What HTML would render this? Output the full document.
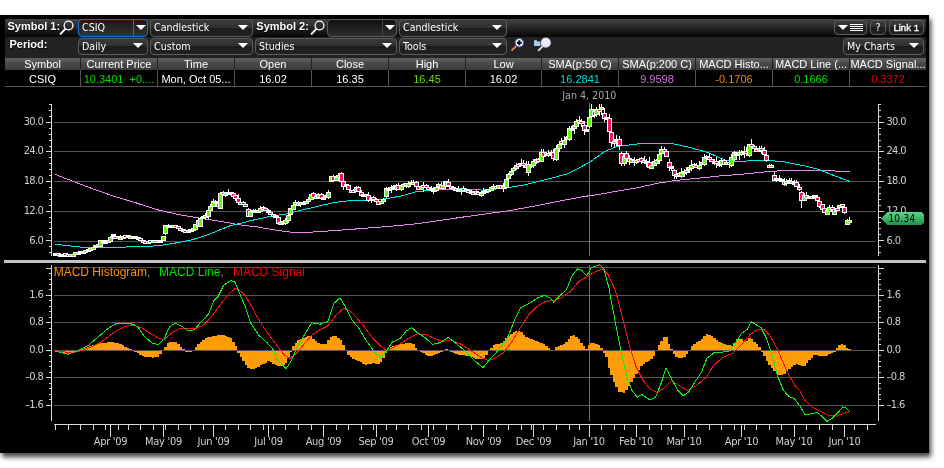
<!DOCTYPE html>
<html><head><meta charset="utf-8"><title>Chart</title>
<style>
html,body{margin:0;padding:0;background:#fff;}
body{width:944px;height:468px;position:relative;overflow:hidden;font-family:"Liberation Sans",Arial,sans-serif;}
#win{position:absolute;left:0;top:15px;width:929px;height:438px;background:#000;box-shadow:2px 4px 5px rgba(0,0,0,.75);}
#tb1{position:absolute;left:5px;top:19px;width:921px;height:18px;background:linear-gradient(#444,#050505);}
#tb2{position:absolute;left:5px;top:37px;width:921px;height:21px;background:#222;}
.lbl{position:absolute;color:#fff;font-weight:bold;font-size:11px;line-height:14px;white-space:nowrap;text-shadow:0 1px 1px #000;}
.cb{position:absolute;box-sizing:border-box;border:1px solid #5c5c5c;border-radius:4px;background:linear-gradient(#3a3a3a 0,#303030 50%,#1c1c1c 50%,#222 100%);color:#fff;font-family:"DejaVu Sans Condensed","DejaVu Sans","Liberation Sans",sans-serif;font-size:10.6px;line-height:15px;white-space:nowrap;}
.cb span{position:absolute;left:3px;top:-0.5px;}
.cb i{position:absolute;right:4px;top:4px;width:0;height:0;border-left:5px solid transparent;border-right:5px solid transparent;border-top:5.5px solid #fff;}
.mag{position:absolute;}
.th{position:absolute;top:58px;height:12px;box-sizing:border-box;border-left:1px solid #222;color:#fff;font-size:11px;line-height:12px;text-align:center;white-space:nowrap;overflow:hidden;background:linear-gradient(#626262,#484848 50%,#3a3a3a);}
.td{position:absolute;top:70px;height:17px;box-sizing:border-box;border-left:1px solid #555;border-bottom:1px solid #555;font-size:11px;line-height:18px;text-align:center;white-space:nowrap;overflow:hidden;background:#000;}
.al,.ar,.ml,.cur{position:absolute;font-family:"DejaVu Sans Condensed","DejaVu Sans","Liberation Sans",sans-serif;font-size:11px;line-height:14px;color:#d0d0d0;white-space:nowrap;letter-spacing:-0.6px;}
.al{left:0;width:43.3px;text-align:right;}
.ar{left:886.4px;}
.ml{top:434.7px;width:60px;text-align:center;letter-spacing:-0.3px;}
#div{position:absolute;left:4px;top:260px;width:922px;height:3px;background:#c4c4c4;}
#leg{position:absolute;left:53.7px;top:265px;font-size:12px;line-height:14px;white-space:nowrap;}
#chart{position:absolute;left:0;top:0;}
#ptag{position:absolute;left:881px;top:212px;}
</style></head><body><div id="all" style="position:absolute;left:0;top:0;width:944px;height:468px;will-change:transform">
<div id="win"></div>
<div id="tb1"></div><div id="tb2"></div>
<div class="lbl" style="left:7.5px;top:19px">Symbol 1:</div>
<svg class="mag" style="left:59px;top:19px" width="16" height="16" viewBox="0 0 16 16"><circle cx="9.5" cy="6.5" r="4.4" fill="none" stroke="#fff" stroke-width="1.3"/><line x1="6.3" y1="9.9" x2="1.6" y2="14.8" stroke="#fff" stroke-width="1.9" stroke-linecap="round"/></svg>
<div class="lbl" style="left:9.5px;top:37px">Period:</div>
<div class="cb" style="left:78px;top:19px;width:70px;height:18px;border-color:#1b74c9;background:linear-gradient(#1a1a1a,#333);"><span>CSIQ</span><i style="top:5px;right:1px"></i></div>
<div style="position:absolute;left:133px;top:20px;width:1px;height:16px;background:#1b74c9"></div>
<div class="cb" style="left:150px;top:19px;width:103px;height:18px;"><span>Candlestick</span><i style="top:5px;right:4px"></i></div>
<div class="lbl" style="left:256.3px;top:19px">Symbol 2:</div>
<svg class="mag" style="left:309.7px;top:19px" width="16" height="16" viewBox="0 0 16 16"><circle cx="9.5" cy="6.5" r="4.4" fill="none" stroke="#fff" stroke-width="1.3"/><line x1="6.3" y1="9.9" x2="1.6" y2="14.8" stroke="#fff" stroke-width="1.9" stroke-linecap="round"/></svg>
<div class="cb" style="left:327px;top:19px;width:70px;height:18px;background:linear-gradient(#111,#2e2e2e);"><span></span><i style="top:5px;right:1px"></i></div>
<div style="position:absolute;left:382px;top:20px;width:1px;height:16px;background:#444"></div>
<div class="cb" style="left:399px;top:19px;width:108px;height:18px;"><span>Candlestick</span><i style="top:5px;right:4px"></i></div>
<div class="cb" style="left:78px;top:38px;width:70px;height:17px;"><span>Daily</span><i style="top:4px;right:4px"></i></div>
<div class="cb" style="left:150px;top:38px;width:103px;height:17px;"><span>Custom</span><i style="top:4px;right:4px"></i></div>
<div class="cb" style="left:255px;top:38px;width:142px;height:17px;"><span>Studies</span><i style="top:4px;right:4px"></i></div>
<div class="cb" style="left:399px;top:38px;width:108px;height:17px;"><span>Tools</span><i style="top:4px;right:4px"></i></div>
<svg class="mag" style="left:510px;top:37px" width="16" height="16" viewBox="0 0 16 16"><line x1="5.7" y1="9.6" x2="2" y2="13" stroke="#e08a3c" stroke-width="1.8" stroke-linecap="round"/><circle cx="9.3" cy="5.7" r="4.2" fill="#fff" stroke="#3a5cd0" stroke-width="1"/><path d="M6.8 5.7h5M9.3 3.2v5" stroke="#000" stroke-width="1.9"/></svg>
<svg class="mag" style="left:534px;top:37px" width="20" height="16" viewBox="0 0 20 16"><path d="M0 3.2h2.6l1 1.2h2.8v4.6h-6.4z" fill="#a6d0ee"/><line x1="8.3" y1="9.6" x2="4.6" y2="13.3" stroke="#f0d6cc" stroke-width="1.9" stroke-linecap="round"/><circle cx="11.8" cy="5.7" r="4.4" fill="#f6f6ff" stroke="#d4d6f2" stroke-width="1.4"/><circle cx="11.8" cy="5.7" r="2.2" fill="none" stroke="#dcdcf6" stroke-width="1"/></svg>
<div class="cb" style="left:834px;top:20px;width:33px;height:15px;border-radius:4px"><i style="right:auto;left:2.7px;top:3.5px"></i><b style="position:absolute;left:15px;top:3px;width:13px;height:7px;background:repeating-linear-gradient(#fff 0,#fff 1px,transparent 1px,transparent 2px)"></b></div>
<div class="cb" style="left:870px;top:20px;width:16px;height:15px;text-align:center;line-height:12px"><span style="left:4.5px;top:0">?</span></div>
<div class="cb" style="left:889px;top:20px;width:35px;height:15px;line-height:12px;font-family:'Liberation Sans',sans-serif;font-size:9.6px;-webkit-text-stroke:0.35px #fff"><span style="left:3.4px;top:1px">Link 1</span></div>
<div class="cb" style="left:843px;top:38px;width:81px;height:17px;"><span>My Charts</span><i style="top:4px;right:4px"></i></div>
<div class="th" style="left:5px;width:75px;border-left:0">Symbol</div><div class="th" style="left:80px;width:77px">Current Price</div><div class="th" style="left:157px;width:77px">Time</div><div class="th" style="left:234px;width:77px">Open</div><div class="th" style="left:311px;width:77px">Close</div><div class="th" style="left:388px;width:77px">High</div><div class="th" style="left:465px;width:76px">Low</div><div class="th" style="left:541px;width:77px">SMA(p:50 C)</div><div class="th" style="left:618px;width:77px">SMA(p:200 C)</div><div class="th" style="left:695px;width:77px">MACD Histo...</div><div class="th" style="left:772px;width:77px">MACD Line (...</div><div class="th" style="left:849px;width:77px">MACD Signal...</div><div class="td" style="left:5px;width:75px;color:#fff;border-left:0">CSIQ</div><div class="td" style="left:80px;width:77px;color:#00e200"><span style="color:#00e200">10.3401&nbsp;&nbsp;+0....</span></div><div class="td" style="left:157px;width:77px;color:#fff">Mon, Oct 05...</div><div class="td" style="left:234px;width:77px;color:#fff">16.02</div><div class="td" style="left:311px;width:77px;color:#fff">16.35</div><div class="td" style="left:388px;width:77px;color:#5fdc00">16.45</div><div class="td" style="left:465px;width:76px;color:#fff">16.02</div><div class="td" style="left:541px;width:77px;color:#00d8d8">16.2841</div><div class="td" style="left:618px;width:77px;color:#d070d8">9.9598</div><div class="td" style="left:695px;width:77px;color:#ee8800">-0.1706</div><div class="td" style="left:772px;width:77px;color:#00e200">0.1666</div><div class="td" style="left:849px;width:77px;color:#e80000">0.3372</div>
<svg id="chart" width="944" height="468" viewBox="0 0 944 468">
<g shape-rendering="crispEdges">
<rect x="54" y="122" width="822" height="1" fill="#555555"/>
<rect x="54" y="151" width="822" height="1" fill="#555555"/>
<rect x="54" y="181" width="822" height="1" fill="#555555"/>
<rect x="54" y="211" width="822" height="1" fill="#555555"/>
<rect x="54" y="241" width="822" height="1" fill="#555555"/>
<rect x="51" y="104" width="1" height="152" fill="#d8d8d8"/>
<rect x="878" y="104" width="1" height="152" fill="#d8d8d8"/>
<rect x="49" y="104" width="2" height="1" fill="#d8d8d8"/>
<rect x="879" y="104" width="2" height="1" fill="#d8d8d8"/>
<rect x="49" y="110" width="2" height="1" fill="#d8d8d8"/>
<rect x="879" y="110" width="2" height="1" fill="#d8d8d8"/>
<rect x="49" y="116" width="2" height="1" fill="#d8d8d8"/>
<rect x="879" y="116" width="2" height="1" fill="#d8d8d8"/>
<rect x="46" y="122" width="5" height="1" fill="#d8d8d8"/>
<rect x="879" y="122" width="5" height="1" fill="#d8d8d8"/>
<rect x="49" y="128" width="2" height="1" fill="#d8d8d8"/>
<rect x="879" y="128" width="2" height="1" fill="#d8d8d8"/>
<rect x="49" y="134" width="2" height="1" fill="#d8d8d8"/>
<rect x="879" y="134" width="2" height="1" fill="#d8d8d8"/>
<rect x="49" y="140" width="2" height="1" fill="#d8d8d8"/>
<rect x="879" y="140" width="2" height="1" fill="#d8d8d8"/>
<rect x="49" y="146" width="2" height="1" fill="#d8d8d8"/>
<rect x="879" y="146" width="2" height="1" fill="#d8d8d8"/>
<rect x="46" y="151" width="5" height="1" fill="#d8d8d8"/>
<rect x="879" y="151" width="5" height="1" fill="#d8d8d8"/>
<rect x="49" y="157" width="2" height="1" fill="#d8d8d8"/>
<rect x="879" y="157" width="2" height="1" fill="#d8d8d8"/>
<rect x="49" y="163" width="2" height="1" fill="#d8d8d8"/>
<rect x="879" y="163" width="2" height="1" fill="#d8d8d8"/>
<rect x="49" y="169" width="2" height="1" fill="#d8d8d8"/>
<rect x="879" y="169" width="2" height="1" fill="#d8d8d8"/>
<rect x="49" y="175" width="2" height="1" fill="#d8d8d8"/>
<rect x="879" y="175" width="2" height="1" fill="#d8d8d8"/>
<rect x="46" y="181" width="5" height="1" fill="#d8d8d8"/>
<rect x="879" y="181" width="5" height="1" fill="#d8d8d8"/>
<rect x="49" y="187" width="2" height="1" fill="#d8d8d8"/>
<rect x="879" y="187" width="2" height="1" fill="#d8d8d8"/>
<rect x="49" y="193" width="2" height="1" fill="#d8d8d8"/>
<rect x="879" y="193" width="2" height="1" fill="#d8d8d8"/>
<rect x="49" y="199" width="2" height="1" fill="#d8d8d8"/>
<rect x="879" y="199" width="2" height="1" fill="#d8d8d8"/>
<rect x="49" y="205" width="2" height="1" fill="#d8d8d8"/>
<rect x="879" y="205" width="2" height="1" fill="#d8d8d8"/>
<rect x="46" y="211" width="5" height="1" fill="#d8d8d8"/>
<rect x="879" y="211" width="5" height="1" fill="#d8d8d8"/>
<rect x="49" y="217" width="2" height="1" fill="#d8d8d8"/>
<rect x="879" y="217" width="2" height="1" fill="#d8d8d8"/>
<rect x="49" y="222" width="2" height="1" fill="#d8d8d8"/>
<rect x="879" y="222" width="2" height="1" fill="#d8d8d8"/>
<rect x="49" y="228" width="2" height="1" fill="#d8d8d8"/>
<rect x="879" y="228" width="2" height="1" fill="#d8d8d8"/>
<rect x="49" y="234" width="2" height="1" fill="#d8d8d8"/>
<rect x="879" y="234" width="2" height="1" fill="#d8d8d8"/>
<rect x="46" y="240" width="5" height="1" fill="#d8d8d8"/>
<rect x="879" y="240" width="5" height="1" fill="#d8d8d8"/>
<rect x="49" y="246" width="2" height="1" fill="#d8d8d8"/>
<rect x="879" y="246" width="2" height="1" fill="#d8d8d8"/>
<rect x="49" y="252" width="2" height="1" fill="#d8d8d8"/>
<rect x="879" y="252" width="2" height="1" fill="#d8d8d8"/>
<rect x="54" y="267" width="822" height="1" fill="#555555"/>
<rect x="54" y="295" width="822" height="1" fill="#555555"/>
<rect x="54" y="322" width="822" height="1" fill="#555555"/>
<rect x="54" y="350" width="822" height="1" fill="#555555"/>
<rect x="54" y="377" width="822" height="1" fill="#555555"/>
<rect x="54" y="405" width="822" height="1" fill="#555555"/>
<rect x="51" y="265" width="1" height="156" fill="#d8d8d8"/>
<rect x="878" y="265" width="1" height="156" fill="#d8d8d8"/>
<rect x="46" y="268" width="5" height="1" fill="#d8d8d8"/>
<rect x="879" y="268" width="5" height="1" fill="#d8d8d8"/>
<rect x="49" y="273" width="2" height="1" fill="#d8d8d8"/>
<rect x="879" y="273" width="2" height="1" fill="#d8d8d8"/>
<rect x="49" y="279" width="2" height="1" fill="#d8d8d8"/>
<rect x="879" y="279" width="2" height="1" fill="#d8d8d8"/>
<rect x="49" y="284" width="2" height="1" fill="#d8d8d8"/>
<rect x="879" y="284" width="2" height="1" fill="#d8d8d8"/>
<rect x="49" y="289" width="2" height="1" fill="#d8d8d8"/>
<rect x="879" y="289" width="2" height="1" fill="#d8d8d8"/>
<rect x="46" y="295" width="5" height="1" fill="#d8d8d8"/>
<rect x="879" y="295" width="5" height="1" fill="#d8d8d8"/>
<rect x="49" y="300" width="2" height="1" fill="#d8d8d8"/>
<rect x="879" y="300" width="2" height="1" fill="#d8d8d8"/>
<rect x="49" y="306" width="2" height="1" fill="#d8d8d8"/>
<rect x="879" y="306" width="2" height="1" fill="#d8d8d8"/>
<rect x="49" y="311" width="2" height="1" fill="#d8d8d8"/>
<rect x="879" y="311" width="2" height="1" fill="#d8d8d8"/>
<rect x="49" y="317" width="2" height="1" fill="#d8d8d8"/>
<rect x="879" y="317" width="2" height="1" fill="#d8d8d8"/>
<rect x="46" y="322" width="5" height="1" fill="#d8d8d8"/>
<rect x="879" y="322" width="5" height="1" fill="#d8d8d8"/>
<rect x="49" y="328" width="2" height="1" fill="#d8d8d8"/>
<rect x="879" y="328" width="2" height="1" fill="#d8d8d8"/>
<rect x="49" y="333" width="2" height="1" fill="#d8d8d8"/>
<rect x="879" y="333" width="2" height="1" fill="#d8d8d8"/>
<rect x="49" y="339" width="2" height="1" fill="#d8d8d8"/>
<rect x="879" y="339" width="2" height="1" fill="#d8d8d8"/>
<rect x="49" y="344" width="2" height="1" fill="#d8d8d8"/>
<rect x="879" y="344" width="2" height="1" fill="#d8d8d8"/>
<rect x="46" y="350" width="5" height="1" fill="#d8d8d8"/>
<rect x="879" y="350" width="5" height="1" fill="#d8d8d8"/>
<rect x="49" y="355" width="2" height="1" fill="#d8d8d8"/>
<rect x="879" y="355" width="2" height="1" fill="#d8d8d8"/>
<rect x="49" y="361" width="2" height="1" fill="#d8d8d8"/>
<rect x="879" y="361" width="2" height="1" fill="#d8d8d8"/>
<rect x="49" y="366" width="2" height="1" fill="#d8d8d8"/>
<rect x="879" y="366" width="2" height="1" fill="#d8d8d8"/>
<rect x="49" y="372" width="2" height="1" fill="#d8d8d8"/>
<rect x="879" y="372" width="2" height="1" fill="#d8d8d8"/>
<rect x="46" y="377" width="5" height="1" fill="#d8d8d8"/>
<rect x="879" y="377" width="5" height="1" fill="#d8d8d8"/>
<rect x="49" y="383" width="2" height="1" fill="#d8d8d8"/>
<rect x="879" y="383" width="2" height="1" fill="#d8d8d8"/>
<rect x="49" y="388" width="2" height="1" fill="#d8d8d8"/>
<rect x="879" y="388" width="2" height="1" fill="#d8d8d8"/>
<rect x="49" y="394" width="2" height="1" fill="#d8d8d8"/>
<rect x="879" y="394" width="2" height="1" fill="#d8d8d8"/>
<rect x="49" y="399" width="2" height="1" fill="#d8d8d8"/>
<rect x="879" y="399" width="2" height="1" fill="#d8d8d8"/>
<rect x="46" y="405" width="5" height="1" fill="#d8d8d8"/>
<rect x="879" y="405" width="5" height="1" fill="#d8d8d8"/>
<rect x="54" y="424" width="822" height="1" fill="#d8d8d8"/>
<rect x="55" y="424" width="1" height="6" fill="#d8d8d8"/>
<rect x="68" y="424" width="1" height="6" fill="#d8d8d8"/>
<rect x="80" y="424" width="1" height="6" fill="#d8d8d8"/>
<rect x="93" y="424" width="1" height="6" fill="#d8d8d8"/>
<rect x="105" y="424" width="1" height="6" fill="#d8d8d8"/>
<rect x="110" y="424" width="1" height="13" fill="#d8d8d8"/>
<rect x="118" y="424" width="1" height="6" fill="#d8d8d8"/>
<rect x="128" y="424" width="1" height="6" fill="#d8d8d8"/>
<rect x="140" y="424" width="1" height="6" fill="#d8d8d8"/>
<rect x="153" y="424" width="1" height="6" fill="#d8d8d8"/>
<rect x="163" y="424" width="1" height="13" fill="#d8d8d8"/>
<rect x="165" y="424" width="1" height="6" fill="#d8d8d8"/>
<rect x="178" y="424" width="1" height="6" fill="#d8d8d8"/>
<rect x="190" y="424" width="1" height="6" fill="#d8d8d8"/>
<rect x="203" y="424" width="1" height="6" fill="#d8d8d8"/>
<rect x="213" y="424" width="1" height="13" fill="#d8d8d8"/>
<rect x="225" y="424" width="1" height="6" fill="#d8d8d8"/>
<rect x="238" y="424" width="1" height="6" fill="#d8d8d8"/>
<rect x="250" y="424" width="1" height="6" fill="#d8d8d8"/>
<rect x="263" y="424" width="1" height="6" fill="#d8d8d8"/>
<rect x="268" y="424" width="1" height="13" fill="#d8d8d8"/>
<rect x="273" y="424" width="1" height="6" fill="#d8d8d8"/>
<rect x="285" y="424" width="1" height="6" fill="#d8d8d8"/>
<rect x="298" y="424" width="1" height="6" fill="#d8d8d8"/>
<rect x="311" y="424" width="1" height="6" fill="#d8d8d8"/>
<rect x="323" y="424" width="1" height="13" fill="#d8d8d8"/>
<rect x="336" y="424" width="1" height="6" fill="#d8d8d8"/>
<rect x="348" y="424" width="1" height="6" fill="#d8d8d8"/>
<rect x="361" y="424" width="1" height="6" fill="#d8d8d8"/>
<rect x="373" y="424" width="1" height="6" fill="#d8d8d8"/>
<rect x="376" y="424" width="1" height="13" fill="#d8d8d8"/>
<rect x="386" y="424" width="1" height="6" fill="#d8d8d8"/>
<rect x="396" y="424" width="1" height="6" fill="#d8d8d8"/>
<rect x="408" y="424" width="1" height="6" fill="#d8d8d8"/>
<rect x="421" y="424" width="1" height="6" fill="#d8d8d8"/>
<rect x="428" y="424" width="1" height="13" fill="#d8d8d8"/>
<rect x="433" y="424" width="1" height="6" fill="#d8d8d8"/>
<rect x="446" y="424" width="1" height="6" fill="#d8d8d8"/>
<rect x="458" y="424" width="1" height="6" fill="#d8d8d8"/>
<rect x="471" y="424" width="1" height="6" fill="#d8d8d8"/>
<rect x="483" y="424" width="1" height="13" fill="#d8d8d8"/>
<rect x="496" y="424" width="1" height="6" fill="#d8d8d8"/>
<rect x="508" y="424" width="1" height="6" fill="#d8d8d8"/>
<rect x="521" y="424" width="1" height="6" fill="#d8d8d8"/>
<rect x="531" y="424" width="1" height="6" fill="#d8d8d8"/>
<rect x="533" y="424" width="1" height="13" fill="#d8d8d8"/>
<rect x="543" y="424" width="1" height="6" fill="#d8d8d8"/>
<rect x="556" y="424" width="1" height="6" fill="#d8d8d8"/>
<rect x="569" y="424" width="1" height="6" fill="#d8d8d8"/>
<rect x="579" y="424" width="1" height="6" fill="#d8d8d8"/>
<rect x="589" y="424" width="1" height="13" fill="#d8d8d8"/>
<rect x="601" y="424" width="1" height="6" fill="#d8d8d8"/>
<rect x="614" y="424" width="1" height="6" fill="#d8d8d8"/>
<rect x="624" y="424" width="1" height="6" fill="#d8d8d8"/>
<rect x="636" y="424" width="1" height="13" fill="#d8d8d8"/>
<rect x="649" y="424" width="1" height="6" fill="#d8d8d8"/>
<rect x="661" y="424" width="1" height="6" fill="#d8d8d8"/>
<rect x="671" y="424" width="1" height="6" fill="#d8d8d8"/>
<rect x="684" y="424" width="1" height="13" fill="#d8d8d8"/>
<rect x="696" y="424" width="1" height="6" fill="#d8d8d8"/>
<rect x="709" y="424" width="1" height="6" fill="#d8d8d8"/>
<rect x="721" y="424" width="1" height="6" fill="#d8d8d8"/>
<rect x="734" y="424" width="1" height="6" fill="#d8d8d8"/>
<rect x="741" y="424" width="1" height="13" fill="#d8d8d8"/>
<rect x="744" y="424" width="1" height="6" fill="#d8d8d8"/>
<rect x="756" y="424" width="1" height="6" fill="#d8d8d8"/>
<rect x="769" y="424" width="1" height="6" fill="#d8d8d8"/>
<rect x="781" y="424" width="1" height="6" fill="#d8d8d8"/>
<rect x="794" y="424" width="1" height="13" fill="#d8d8d8"/>
<rect x="806" y="424" width="1" height="6" fill="#d8d8d8"/>
<rect x="819" y="424" width="1" height="6" fill="#d8d8d8"/>
<rect x="832" y="424" width="1" height="6" fill="#d8d8d8"/>
<rect x="844" y="424" width="1" height="13" fill="#d8d8d8"/>
<rect x="854" y="424" width="1" height="6" fill="#d8d8d8"/>
<rect x="867" y="424" width="1" height="6" fill="#d8d8d8"/>
<rect x="589" y="103" width="1" height="153" fill="#707070"/>
<rect x="589" y="265" width="1" height="156" fill="#707070"/>
</g>
<g shape-rendering="crispEdges" fill="#ff9c0a">
<rect x="57" y="351" width="2" height="1"/>
<rect x="59" y="351" width="3" height="1"/>
<rect x="62" y="351" width="2" height="2"/>
<rect x="64" y="351" width="3" height="2"/>
<rect x="67" y="351" width="2" height="2"/>
<rect x="69" y="351" width="3" height="2"/>
<rect x="72" y="351" width="2" height="1"/>
<rect x="74" y="351" width="3" height="1"/>
<rect x="79" y="349" width="3" height="1"/>
<rect x="82" y="349" width="2" height="1"/>
<rect x="84" y="348" width="3" height="2"/>
<rect x="87" y="347" width="2" height="3"/>
<rect x="89" y="346" width="3" height="4"/>
<rect x="92" y="345" width="2" height="5"/>
<rect x="94" y="345" width="3" height="5"/>
<rect x="97" y="344" width="2" height="6"/>
<rect x="99" y="343" width="3" height="7"/>
<rect x="102" y="343" width="2" height="7"/>
<rect x="104" y="343" width="3" height="7"/>
<rect x="107" y="342" width="2" height="8"/>
<rect x="109" y="342" width="3" height="8"/>
<rect x="112" y="342" width="2" height="8"/>
<rect x="114" y="343" width="3" height="7"/>
<rect x="117" y="343" width="2" height="7"/>
<rect x="119" y="344" width="3" height="6"/>
<rect x="122" y="345" width="2" height="5"/>
<rect x="124" y="347" width="3" height="3"/>
<rect x="127" y="348" width="2" height="2"/>
<rect x="129" y="349" width="3" height="1"/>
<rect x="134" y="351" width="3" height="1"/>
<rect x="137" y="351" width="2" height="2"/>
<rect x="139" y="351" width="3" height="4"/>
<rect x="142" y="351" width="2" height="5"/>
<rect x="144" y="351" width="3" height="6"/>
<rect x="147" y="351" width="2" height="6"/>
<rect x="149" y="351" width="3" height="6"/>
<rect x="152" y="351" width="2" height="7"/>
<rect x="154" y="351" width="3" height="6"/>
<rect x="157" y="351" width="2" height="6"/>
<rect x="159" y="351" width="3" height="3"/>
<rect x="164" y="347" width="3" height="3"/>
<rect x="167" y="343" width="2" height="7"/>
<rect x="169" y="342" width="3" height="8"/>
<rect x="172" y="342" width="2" height="8"/>
<rect x="174" y="342" width="3" height="8"/>
<rect x="177" y="344" width="3" height="6"/>
<rect x="180" y="347" width="2" height="3"/>
<rect x="182" y="349" width="3" height="1"/>
<rect x="185" y="351" width="2" height="1"/>
<rect x="187" y="351" width="3" height="1"/>
<rect x="190" y="351" width="2" height="1"/>
<rect x="195" y="347" width="2" height="3"/>
<rect x="197" y="344" width="3" height="6"/>
<rect x="200" y="342" width="2" height="8"/>
<rect x="202" y="340" width="3" height="10"/>
<rect x="205" y="338" width="2" height="12"/>
<rect x="207" y="337" width="3" height="13"/>
<rect x="210" y="337" width="2" height="13"/>
<rect x="212" y="336" width="3" height="14"/>
<rect x="215" y="336" width="2" height="14"/>
<rect x="217" y="335" width="3" height="15"/>
<rect x="220" y="335" width="2" height="15"/>
<rect x="222" y="335" width="3" height="15"/>
<rect x="225" y="336" width="2" height="14"/>
<rect x="227" y="337" width="3" height="13"/>
<rect x="230" y="338" width="2" height="12"/>
<rect x="232" y="342" width="3" height="8"/>
<rect x="235" y="346" width="2" height="4"/>
<rect x="237" y="351" width="3" height="2"/>
<rect x="240" y="351" width="2" height="6"/>
<rect x="242" y="351" width="3" height="10"/>
<rect x="245" y="351" width="2" height="14"/>
<rect x="247" y="351" width="3" height="17"/>
<rect x="250" y="351" width="2" height="18"/>
<rect x="252" y="351" width="3" height="18"/>
<rect x="255" y="351" width="2" height="17"/>
<rect x="257" y="351" width="3" height="16"/>
<rect x="260" y="351" width="2" height="14"/>
<rect x="262" y="351" width="3" height="13"/>
<rect x="265" y="351" width="2" height="12"/>
<rect x="267" y="351" width="3" height="10"/>
<rect x="270" y="351" width="2" height="11"/>
<rect x="272" y="351" width="3" height="13"/>
<rect x="275" y="351" width="2" height="14"/>
<rect x="277" y="351" width="3" height="15"/>
<rect x="280" y="351" width="2" height="15"/>
<rect x="282" y="351" width="3" height="14"/>
<rect x="285" y="351" width="2" height="12"/>
<rect x="287" y="351" width="3" height="7"/>
<rect x="290" y="351" width="2" height="1"/>
<rect x="292" y="346" width="3" height="4"/>
<rect x="295" y="343" width="2" height="7"/>
<rect x="297" y="340" width="3" height="10"/>
<rect x="300" y="339" width="2" height="11"/>
<rect x="302" y="338" width="3" height="12"/>
<rect x="305" y="337" width="2" height="13"/>
<rect x="307" y="336" width="3" height="14"/>
<rect x="310" y="336" width="2" height="14"/>
<rect x="312" y="339" width="3" height="11"/>
<rect x="315" y="341" width="2" height="9"/>
<rect x="317" y="343" width="3" height="7"/>
<rect x="320" y="344" width="2" height="6"/>
<rect x="322" y="344" width="3" height="6"/>
<rect x="325" y="344" width="2" height="6"/>
<rect x="327" y="340" width="3" height="10"/>
<rect x="330" y="337" width="2" height="13"/>
<rect x="332" y="336" width="3" height="14"/>
<rect x="335" y="336" width="2" height="14"/>
<rect x="337" y="338" width="3" height="12"/>
<rect x="340" y="340" width="2" height="10"/>
<rect x="342" y="345" width="3" height="5"/>
<rect x="347" y="351" width="3" height="4"/>
<rect x="350" y="351" width="2" height="6"/>
<rect x="352" y="351" width="3" height="8"/>
<rect x="355" y="351" width="2" height="9"/>
<rect x="357" y="351" width="3" height="10"/>
<rect x="360" y="351" width="2" height="11"/>
<rect x="362" y="351" width="3" height="13"/>
<rect x="365" y="351" width="2" height="14"/>
<rect x="367" y="351" width="3" height="13"/>
<rect x="370" y="351" width="2" height="13"/>
<rect x="372" y="351" width="3" height="12"/>
<rect x="375" y="351" width="2" height="13"/>
<rect x="377" y="351" width="3" height="13"/>
<rect x="380" y="351" width="2" height="11"/>
<rect x="382" y="351" width="3" height="7"/>
<rect x="385" y="351" width="2" height="2"/>
<rect x="387" y="349" width="3" height="1"/>
<rect x="390" y="347" width="2" height="3"/>
<rect x="392" y="346" width="3" height="4"/>
<rect x="395" y="345" width="2" height="5"/>
<rect x="397" y="345" width="3" height="5"/>
<rect x="400" y="344" width="2" height="6"/>
<rect x="402" y="344" width="3" height="6"/>
<rect x="405" y="343" width="2" height="7"/>
<rect x="407" y="343" width="3" height="7"/>
<rect x="410" y="343" width="2" height="7"/>
<rect x="412" y="344" width="3" height="6"/>
<rect x="415" y="348" width="2" height="2"/>
<rect x="420" y="351" width="2" height="1"/>
<rect x="422" y="351" width="3" height="2"/>
<rect x="425" y="351" width="2" height="4"/>
<rect x="427" y="351" width="3" height="5"/>
<rect x="430" y="351" width="3" height="5"/>
<rect x="433" y="351" width="2" height="4"/>
<rect x="435" y="351" width="3" height="3"/>
<rect x="438" y="351" width="2" height="2"/>
<rect x="440" y="351" width="3" height="1"/>
<rect x="445" y="349" width="3" height="1"/>
<rect x="450" y="351" width="3" height="1"/>
<rect x="453" y="351" width="2" height="2"/>
<rect x="455" y="351" width="3" height="3"/>
<rect x="458" y="351" width="2" height="4"/>
<rect x="460" y="351" width="3" height="4"/>
<rect x="463" y="351" width="2" height="4"/>
<rect x="465" y="351" width="3" height="5"/>
<rect x="468" y="351" width="2" height="5"/>
<rect x="470" y="351" width="3" height="6"/>
<rect x="473" y="351" width="2" height="7"/>
<rect x="475" y="351" width="3" height="8"/>
<rect x="478" y="351" width="2" height="8"/>
<rect x="480" y="351" width="3" height="8"/>
<rect x="483" y="351" width="2" height="8"/>
<rect x="485" y="351" width="3" height="4"/>
<rect x="490" y="348" width="3" height="2"/>
<rect x="493" y="345" width="2" height="5"/>
<rect x="495" y="344" width="3" height="6"/>
<rect x="498" y="344" width="2" height="6"/>
<rect x="500" y="343" width="3" height="7"/>
<rect x="503" y="341" width="2" height="9"/>
<rect x="505" y="338" width="3" height="12"/>
<rect x="508" y="336" width="2" height="14"/>
<rect x="510" y="334" width="3" height="16"/>
<rect x="513" y="332" width="2" height="18"/>
<rect x="515" y="331" width="3" height="19"/>
<rect x="518" y="331" width="2" height="19"/>
<rect x="520" y="332" width="3" height="18"/>
<rect x="523" y="335" width="2" height="15"/>
<rect x="525" y="337" width="3" height="13"/>
<rect x="528" y="338" width="2" height="12"/>
<rect x="530" y="339" width="3" height="11"/>
<rect x="533" y="340" width="2" height="10"/>
<rect x="535" y="341" width="3" height="9"/>
<rect x="538" y="342" width="2" height="8"/>
<rect x="540" y="343" width="3" height="7"/>
<rect x="543" y="344" width="2" height="6"/>
<rect x="545" y="346" width="3" height="4"/>
<rect x="548" y="348" width="2" height="2"/>
<rect x="555" y="347" width="3" height="3"/>
<rect x="558" y="346" width="2" height="4"/>
<rect x="560" y="345" width="3" height="5"/>
<rect x="563" y="344" width="2" height="6"/>
<rect x="565" y="342" width="3" height="8"/>
<rect x="568" y="339" width="2" height="11"/>
<rect x="570" y="336" width="3" height="14"/>
<rect x="573" y="335" width="2" height="15"/>
<rect x="575" y="337" width="3" height="13"/>
<rect x="578" y="339" width="2" height="11"/>
<rect x="580" y="343" width="3" height="7"/>
<rect x="583" y="346" width="2" height="4"/>
<rect x="585" y="349" width="3" height="1"/>
<rect x="588" y="345" width="2" height="5"/>
<rect x="590" y="343" width="3" height="7"/>
<rect x="593" y="343" width="2" height="7"/>
<rect x="595" y="344" width="3" height="6"/>
<rect x="598" y="345" width="2" height="5"/>
<rect x="600" y="348" width="3" height="2"/>
<rect x="603" y="351" width="2" height="2"/>
<rect x="605" y="351" width="3" height="6"/>
<rect x="608" y="351" width="2" height="17"/>
<rect x="610" y="351" width="3" height="24"/>
<rect x="613" y="351" width="2" height="31"/>
<rect x="615" y="351" width="3" height="36"/>
<rect x="618" y="351" width="2" height="41"/>
<rect x="620" y="351" width="3" height="41"/>
<rect x="623" y="351" width="2" height="42"/>
<rect x="625" y="351" width="3" height="39"/>
<rect x="628" y="351" width="2" height="35"/>
<rect x="630" y="351" width="3" height="31"/>
<rect x="633" y="351" width="2" height="27"/>
<rect x="635" y="351" width="3" height="23"/>
<rect x="638" y="351" width="2" height="19"/>
<rect x="640" y="351" width="3" height="15"/>
<rect x="643" y="351" width="2" height="13"/>
<rect x="645" y="351" width="3" height="11"/>
<rect x="648" y="351" width="2" height="10"/>
<rect x="650" y="351" width="3" height="8"/>
<rect x="653" y="351" width="2" height="5"/>
<rect x="658" y="345" width="2" height="5"/>
<rect x="660" y="341" width="3" height="9"/>
<rect x="663" y="337" width="2" height="13"/>
<rect x="665" y="337" width="3" height="13"/>
<rect x="668" y="344" width="2" height="6"/>
<rect x="670" y="349" width="3" height="1"/>
<rect x="673" y="351" width="2" height="3"/>
<rect x="675" y="351" width="3" height="6"/>
<rect x="678" y="351" width="2" height="7"/>
<rect x="680" y="351" width="3" height="7"/>
<rect x="683" y="351" width="3" height="6"/>
<rect x="686" y="351" width="2" height="3"/>
<rect x="691" y="346" width="2" height="4"/>
<rect x="693" y="344" width="3" height="6"/>
<rect x="696" y="342" width="2" height="8"/>
<rect x="698" y="341" width="3" height="9"/>
<rect x="701" y="339" width="2" height="11"/>
<rect x="703" y="336" width="3" height="14"/>
<rect x="706" y="334" width="2" height="16"/>
<rect x="708" y="335" width="3" height="15"/>
<rect x="711" y="336" width="2" height="14"/>
<rect x="713" y="338" width="3" height="12"/>
<rect x="716" y="340" width="2" height="10"/>
<rect x="718" y="342" width="3" height="8"/>
<rect x="721" y="343" width="2" height="7"/>
<rect x="723" y="344" width="3" height="6"/>
<rect x="726" y="345" width="2" height="5"/>
<rect x="728" y="345" width="3" height="5"/>
<rect x="731" y="346" width="2" height="4"/>
<rect x="733" y="343" width="3" height="7"/>
<rect x="736" y="339" width="2" height="11"/>
<rect x="738" y="339" width="3" height="11"/>
<rect x="741" y="339" width="2" height="11"/>
<rect x="743" y="341" width="3" height="9"/>
<rect x="746" y="341" width="2" height="9"/>
<rect x="748" y="338" width="3" height="12"/>
<rect x="751" y="339" width="2" height="11"/>
<rect x="753" y="342" width="3" height="8"/>
<rect x="756" y="344" width="2" height="6"/>
<rect x="758" y="347" width="3" height="3"/>
<rect x="761" y="351" width="2" height="1"/>
<rect x="763" y="351" width="3" height="5"/>
<rect x="766" y="351" width="2" height="10"/>
<rect x="768" y="351" width="3" height="14"/>
<rect x="771" y="351" width="2" height="17"/>
<rect x="773" y="351" width="3" height="20"/>
<rect x="776" y="351" width="2" height="23"/>
<rect x="778" y="351" width="3" height="24"/>
<rect x="781" y="351" width="2" height="24"/>
<rect x="783" y="351" width="3" height="23"/>
<rect x="786" y="351" width="2" height="20"/>
<rect x="788" y="351" width="3" height="18"/>
<rect x="791" y="351" width="2" height="16"/>
<rect x="793" y="351" width="3" height="14"/>
<rect x="796" y="351" width="2" height="13"/>
<rect x="798" y="351" width="3" height="14"/>
<rect x="801" y="351" width="2" height="15"/>
<rect x="803" y="351" width="3" height="15"/>
<rect x="806" y="351" width="2" height="12"/>
<rect x="808" y="351" width="3" height="9"/>
<rect x="811" y="351" width="2" height="7"/>
<rect x="813" y="351" width="3" height="4"/>
<rect x="816" y="351" width="2" height="4"/>
<rect x="818" y="351" width="3" height="5"/>
<rect x="821" y="351" width="2" height="5"/>
<rect x="823" y="351" width="3" height="5"/>
<rect x="826" y="351" width="2" height="5"/>
<rect x="828" y="351" width="3" height="3"/>
<rect x="831" y="351" width="2" height="2"/>
<rect x="833" y="351" width="3" height="1"/>
<rect x="836" y="348" width="2" height="2"/>
<rect x="838" y="345" width="3" height="5"/>
<rect x="841" y="344" width="2" height="6"/>
<rect x="843" y="345" width="3" height="5"/>
<rect x="846" y="348" width="2" height="2"/>
<rect x="848" y="349" width="3" height="1"/>
</g>
<polyline points="55.3,174.5 71.4,180.7 92.7,188.8 114.0,196.3 135.5,202.7 156.8,209.6 178.2,214.5 199.6,218.1 221.0,221.5 242.3,225.2 257.8,227.0 272.8,229.7 287.7,231.9 298.4,232.5 309.1,232.3 330.5,230.8 351.8,229.3 373.2,227.6 394.6,225.9 415.9,223.8 437.3,220.8 460.0,217.5 485.0,214.0 507.3,211.0 535.0,206.0 560.0,201.0 584.0,196.5 599.0,194.4 618.0,191.0 639.8,187.3 656.4,183.4 677.7,180.2 699.1,178.1 720.5,175.9 741.8,174.2 763.2,172.1 784.6,170.4 806.0,170.5 834.8,171.0 850.0,171.4" fill="none" stroke="#ee82ee" stroke-width="1" shape-rendering="crispEdges"/>
<polyline points="55.3,244.4 67.0,245.5 82.0,247.2 99.0,247.6 114.0,247.6 135.5,246.5 156.8,245.9 174.0,243.3 191.0,240.1 208.0,234.8 221.0,229.4 231.6,225.2 242.3,223.0 249.8,220.9 257.8,219.0 272.8,215.9 287.7,213.7 304.8,209.4 319.8,205.8 334.7,202.4 347.6,200.9 364.7,200.3 386.0,198.8 403.1,195.6 415.9,191.7 430.9,190.2 444.8,189.6 461.4,188.6 482.7,190.1 504.1,188.4 525.5,184.7 546.8,179.4 568.2,173.6 589.6,162.3 604.5,151.6 617.4,146.3 632.3,144.6 639.8,143.7 652.0,143.2 673.5,143.9 688.4,147.1 707.6,152.4 724.7,159.9 735.4,162.0 754.7,160.3 767.5,160.3 784.6,162.0 801.7,165.3 818.8,169.5 834.8,175.9 850.0,181.6" fill="none" stroke="#00e8e8" stroke-width="1" shape-rendering="crispEdges"/>
<g shape-rendering="crispEdges">
<rect x="53" y="253" width="5" height="3" fill="#ffffff"/>
<rect x="56" y="253" width="5" height="3" fill="#ffffff"/>
<rect x="57" y="254" width="3" height="1" fill="#ff0a64"/>
<rect x="58" y="254" width="5" height="3" fill="#ffffff"/>
<rect x="61" y="254" width="5" height="3" fill="#ffffff"/>
<rect x="63" y="253" width="5" height="3" fill="#ffffff"/>
<rect x="64" y="254" width="3" height="1" fill="#ff0a64"/>
<rect x="66" y="254" width="5" height="3" fill="#ffffff"/>
<rect x="67" y="255" width="3" height="1" fill="#ff0a64"/>
<rect x="68" y="254" width="5" height="3" fill="#ffffff"/>
<rect x="69" y="255" width="3" height="1" fill="#62f808"/>
<rect x="71" y="254" width="5" height="3" fill="#ffffff"/>
<rect x="72" y="255" width="3" height="1" fill="#62f808"/>
<rect x="73" y="252" width="5" height="3" fill="#ffffff"/>
<rect x="74" y="253" width="3" height="1" fill="#62f808"/>
<rect x="76" y="252" width="5" height="3" fill="#ffffff"/>
<rect x="77" y="253" width="3" height="1" fill="#62f808"/>
<rect x="78" y="251" width="5" height="3" fill="#ffffff"/>
<rect x="81" y="251" width="5" height="3" fill="#ffffff"/>
<rect x="85" y="250" width="1" height="3" fill="#ffffff"/>
<rect x="83" y="250" width="5" height="3" fill="#ffffff"/>
<rect x="84" y="251" width="3" height="1" fill="#62f808"/>
<rect x="86" y="249" width="5" height="3" fill="#ffffff"/>
<rect x="88" y="248" width="5" height="3" fill="#ffffff"/>
<rect x="89" y="249" width="3" height="1" fill="#62f808"/>
<rect x="91" y="247" width="5" height="3" fill="#ffffff"/>
<rect x="92" y="248" width="3" height="1" fill="#62f808"/>
<rect x="93" y="245" width="5" height="3" fill="#ffffff"/>
<rect x="96" y="244" width="5" height="3" fill="#ffffff"/>
<rect x="97" y="245" width="3" height="1" fill="#62f808"/>
<rect x="98" y="240" width="5" height="7" fill="#ffffff"/>
<rect x="99" y="241" width="3" height="5" fill="#62f808"/>
<rect x="103" y="240" width="1" height="3" fill="#ffffff"/>
<rect x="101" y="240" width="5" height="3" fill="#ffffff"/>
<rect x="103" y="241" width="5" height="3" fill="#ffffff"/>
<rect x="106" y="240" width="5" height="3" fill="#ffffff"/>
<rect x="107" y="241" width="3" height="1" fill="#62f808"/>
<rect x="110" y="236" width="1" height="6" fill="#ffffff"/>
<rect x="108" y="237" width="5" height="5" fill="#ffffff"/>
<rect x="109" y="238" width="3" height="3" fill="#62f808"/>
<rect x="113" y="234" width="1" height="4" fill="#ffffff"/>
<rect x="111" y="234" width="5" height="3" fill="#ffffff"/>
<rect x="115" y="236" width="1" height="2" fill="#ffffff"/>
<rect x="113" y="236" width="5" height="3" fill="#ffffff"/>
<rect x="114" y="237" width="3" height="1" fill="#ff0a64"/>
<rect x="116" y="236" width="5" height="3" fill="#ffffff"/>
<rect x="117" y="237" width="3" height="1" fill="#62f808"/>
<rect x="120" y="235" width="1" height="3" fill="#ffffff"/>
<rect x="118" y="237" width="5" height="3" fill="#ffffff"/>
<rect x="119" y="238" width="3" height="1" fill="#62f808"/>
<rect x="121" y="236" width="5" height="3" fill="#ffffff"/>
<rect x="122" y="237" width="3" height="1" fill="#62f808"/>
<rect x="123" y="235" width="5" height="3" fill="#ffffff"/>
<rect x="124" y="236" width="3" height="1" fill="#ff0a64"/>
<rect x="128" y="235" width="1" height="4" fill="#ffffff"/>
<rect x="126" y="235" width="5" height="3" fill="#ffffff"/>
<rect x="130" y="236" width="1" height="2" fill="#ffffff"/>
<rect x="128" y="236" width="5" height="3" fill="#ffffff"/>
<rect x="129" y="237" width="3" height="1" fill="#62f808"/>
<rect x="133" y="236" width="1" height="2" fill="#ffffff"/>
<rect x="131" y="236" width="5" height="3" fill="#ffffff"/>
<rect x="133" y="236" width="5" height="3" fill="#ffffff"/>
<rect x="136" y="237" width="5" height="3" fill="#ffffff"/>
<rect x="140" y="237" width="1" height="4" fill="#ffffff"/>
<rect x="138" y="238" width="5" height="3" fill="#ffffff"/>
<rect x="139" y="239" width="3" height="1" fill="#ff0a64"/>
<rect x="141" y="240" width="5" height="3" fill="#ffffff"/>
<rect x="142" y="241" width="3" height="1" fill="#ff0a64"/>
<rect x="145" y="241" width="1" height="2" fill="#ffffff"/>
<rect x="143" y="241" width="5" height="3" fill="#ffffff"/>
<rect x="144" y="242" width="3" height="1" fill="#ff0a64"/>
<rect x="146" y="241" width="5" height="3" fill="#ffffff"/>
<rect x="147" y="242" width="3" height="1" fill="#ff0a64"/>
<rect x="150" y="240" width="1" height="3" fill="#ffffff"/>
<rect x="148" y="240" width="5" height="3" fill="#ffffff"/>
<rect x="149" y="241" width="3" height="1" fill="#ff0a64"/>
<rect x="151" y="240" width="5" height="3" fill="#ffffff"/>
<rect x="152" y="241" width="3" height="1" fill="#62f808"/>
<rect x="153" y="240" width="5" height="3" fill="#ffffff"/>
<rect x="154" y="241" width="3" height="1" fill="#62f808"/>
<rect x="156" y="240" width="5" height="3" fill="#ffffff"/>
<rect x="157" y="241" width="3" height="1" fill="#62f808"/>
<rect x="158" y="240" width="5" height="3" fill="#ffffff"/>
<rect x="161" y="236" width="5" height="5" fill="#ffffff"/>
<rect x="162" y="237" width="3" height="3" fill="#62f808"/>
<rect x="165" y="225" width="1" height="10" fill="#ffffff"/>
<rect x="163" y="225" width="5" height="9" fill="#ffffff"/>
<rect x="164" y="226" width="3" height="7" fill="#62f808"/>
<rect x="168" y="224" width="1" height="3" fill="#ffffff"/>
<rect x="166" y="225" width="5" height="3" fill="#ffffff"/>
<rect x="168" y="225" width="5" height="3" fill="#ffffff"/>
<rect x="173" y="225" width="1" height="3" fill="#ffffff"/>
<rect x="171" y="225" width="5" height="3" fill="#ffffff"/>
<rect x="172" y="226" width="3" height="1" fill="#62f808"/>
<rect x="173" y="225" width="5" height="3" fill="#ffffff"/>
<rect x="174" y="226" width="3" height="1" fill="#ff0a64"/>
<rect x="176" y="226" width="5" height="3" fill="#ffffff"/>
<rect x="177" y="227" width="3" height="1" fill="#ff0a64"/>
<rect x="180" y="227" width="1" height="4" fill="#ffffff"/>
<rect x="178" y="228" width="5" height="3" fill="#ffffff"/>
<rect x="179" y="229" width="3" height="1" fill="#ff0a64"/>
<rect x="181" y="229" width="5" height="3" fill="#ffffff"/>
<rect x="185" y="230" width="1" height="3" fill="#ffffff"/>
<rect x="183" y="230" width="5" height="3" fill="#ffffff"/>
<rect x="184" y="231" width="3" height="1" fill="#ff0a64"/>
<rect x="188" y="229" width="1" height="4" fill="#ffffff"/>
<rect x="186" y="230" width="5" height="3" fill="#ffffff"/>
<rect x="187" y="231" width="3" height="1" fill="#62f808"/>
<rect x="190" y="229" width="1" height="2" fill="#ffffff"/>
<rect x="188" y="229" width="5" height="3" fill="#ffffff"/>
<rect x="193" y="227" width="1" height="5" fill="#ffffff"/>
<rect x="191" y="228" width="5" height="3" fill="#ffffff"/>
<rect x="192" y="229" width="3" height="1" fill="#62f808"/>
<rect x="193" y="224" width="5" height="6" fill="#ffffff"/>
<rect x="194" y="225" width="3" height="4" fill="#62f808"/>
<rect x="198" y="218" width="1" height="8" fill="#ffffff"/>
<rect x="196" y="220" width="5" height="7" fill="#ffffff"/>
<rect x="197" y="221" width="3" height="5" fill="#62f808"/>
<rect x="200" y="217" width="1" height="10" fill="#ffffff"/>
<rect x="198" y="218" width="5" height="9" fill="#ffffff"/>
<rect x="199" y="219" width="3" height="7" fill="#62f808"/>
<rect x="201" y="216" width="5" height="3" fill="#ffffff"/>
<rect x="205" y="213" width="1" height="5" fill="#ffffff"/>
<rect x="203" y="215" width="5" height="3" fill="#ffffff"/>
<rect x="204" y="216" width="3" height="1" fill="#62f808"/>
<rect x="208" y="209" width="1" height="10" fill="#ffffff"/>
<rect x="206" y="210" width="5" height="7" fill="#ffffff"/>
<rect x="207" y="211" width="3" height="5" fill="#62f808"/>
<rect x="210" y="204" width="1" height="9" fill="#ffffff"/>
<rect x="208" y="206" width="5" height="5" fill="#ffffff"/>
<rect x="209" y="207" width="3" height="3" fill="#62f808"/>
<rect x="213" y="199" width="1" height="8" fill="#ffffff"/>
<rect x="211" y="201" width="5" height="6" fill="#ffffff"/>
<rect x="212" y="202" width="3" height="4" fill="#62f808"/>
<rect x="215" y="200" width="1" height="4" fill="#ffffff"/>
<rect x="213" y="201" width="5" height="3" fill="#ffffff"/>
<rect x="218" y="200" width="1" height="8" fill="#ffffff"/>
<rect x="216" y="203" width="5" height="4" fill="#ffffff"/>
<rect x="217" y="204" width="3" height="2" fill="#ff0a64"/>
<rect x="220" y="192" width="1" height="17" fill="#ffffff"/>
<rect x="218" y="193" width="5" height="16" fill="#ffffff"/>
<rect x="219" y="194" width="3" height="14" fill="#62f808"/>
<rect x="223" y="191" width="1" height="4" fill="#ffffff"/>
<rect x="221" y="192" width="5" height="3" fill="#ffffff"/>
<rect x="222" y="193" width="3" height="1" fill="#ff0a64"/>
<rect x="225" y="192" width="1" height="5" fill="#ffffff"/>
<rect x="223" y="193" width="5" height="3" fill="#ffffff"/>
<rect x="224" y="194" width="3" height="1" fill="#62f808"/>
<rect x="228" y="189" width="1" height="5" fill="#ffffff"/>
<rect x="226" y="192" width="5" height="3" fill="#ffffff"/>
<rect x="230" y="192" width="1" height="2" fill="#ffffff"/>
<rect x="228" y="192" width="5" height="3" fill="#ffffff"/>
<rect x="233" y="192" width="1" height="6" fill="#ffffff"/>
<rect x="231" y="193" width="5" height="4" fill="#ffffff"/>
<rect x="232" y="194" width="3" height="2" fill="#ff0a64"/>
<rect x="235" y="193" width="1" height="8" fill="#ffffff"/>
<rect x="233" y="195" width="5" height="4" fill="#ffffff"/>
<rect x="234" y="196" width="3" height="2" fill="#ff0a64"/>
<rect x="238" y="194" width="1" height="9" fill="#ffffff"/>
<rect x="236" y="198" width="5" height="5" fill="#ffffff"/>
<rect x="237" y="199" width="3" height="3" fill="#ff0a64"/>
<rect x="240" y="201" width="1" height="4" fill="#ffffff"/>
<rect x="238" y="202" width="5" height="3" fill="#ffffff"/>
<rect x="239" y="203" width="3" height="1" fill="#ff0a64"/>
<rect x="243" y="201" width="1" height="5" fill="#ffffff"/>
<rect x="241" y="202" width="5" height="3" fill="#ffffff"/>
<rect x="242" y="203" width="3" height="1" fill="#ff0a64"/>
<rect x="245" y="203" width="1" height="4" fill="#ffffff"/>
<rect x="243" y="204" width="5" height="3" fill="#ffffff"/>
<rect x="244" y="205" width="3" height="1" fill="#ff0a64"/>
<rect x="248" y="208" width="1" height="9" fill="#ffffff"/>
<rect x="246" y="209" width="5" height="8" fill="#ffffff"/>
<rect x="247" y="210" width="3" height="6" fill="#ff0a64"/>
<rect x="250" y="210" width="1" height="7" fill="#ffffff"/>
<rect x="248" y="211" width="5" height="6" fill="#ffffff"/>
<rect x="249" y="212" width="3" height="4" fill="#62f808"/>
<rect x="253" y="209" width="1" height="4" fill="#ffffff"/>
<rect x="251" y="210" width="5" height="3" fill="#ffffff"/>
<rect x="255" y="209" width="1" height="4" fill="#ffffff"/>
<rect x="253" y="210" width="5" height="3" fill="#ffffff"/>
<rect x="258" y="209" width="1" height="3" fill="#ffffff"/>
<rect x="256" y="210" width="5" height="3" fill="#ffffff"/>
<rect x="257" y="211" width="3" height="1" fill="#62f808"/>
<rect x="260" y="206" width="1" height="7" fill="#ffffff"/>
<rect x="258" y="208" width="5" height="4" fill="#ffffff"/>
<rect x="259" y="209" width="3" height="2" fill="#62f808"/>
<rect x="263" y="206" width="1" height="4" fill="#ffffff"/>
<rect x="261" y="207" width="5" height="3" fill="#ffffff"/>
<rect x="262" y="208" width="3" height="1" fill="#ff0a64"/>
<rect x="265" y="208" width="1" height="3" fill="#ffffff"/>
<rect x="263" y="208" width="5" height="3" fill="#ffffff"/>
<rect x="264" y="209" width="3" height="1" fill="#ff0a64"/>
<rect x="268" y="209" width="1" height="3" fill="#ffffff"/>
<rect x="266" y="210" width="5" height="3" fill="#ffffff"/>
<rect x="270" y="210" width="1" height="4" fill="#ffffff"/>
<rect x="268" y="212" width="5" height="3" fill="#ffffff"/>
<rect x="269" y="213" width="3" height="1" fill="#ff0a64"/>
<rect x="271" y="214" width="5" height="3" fill="#ffffff"/>
<rect x="272" y="215" width="3" height="1" fill="#ff0a64"/>
<rect x="275" y="215" width="1" height="3" fill="#ffffff"/>
<rect x="273" y="215" width="5" height="3" fill="#ffffff"/>
<rect x="278" y="216" width="1" height="8" fill="#ffffff"/>
<rect x="276" y="217" width="5" height="7" fill="#ffffff"/>
<rect x="277" y="218" width="3" height="5" fill="#ff0a64"/>
<rect x="278" y="222" width="5" height="3" fill="#ffffff"/>
<rect x="279" y="223" width="3" height="1" fill="#62f808"/>
<rect x="283" y="221" width="1" height="4" fill="#ffffff"/>
<rect x="281" y="221" width="5" height="3" fill="#ffffff"/>
<rect x="285" y="218" width="1" height="7" fill="#ffffff"/>
<rect x="283" y="220" width="5" height="4" fill="#ffffff"/>
<rect x="284" y="221" width="3" height="2" fill="#62f808"/>
<rect x="288" y="213" width="1" height="10" fill="#ffffff"/>
<rect x="286" y="215" width="5" height="6" fill="#ffffff"/>
<rect x="287" y="216" width="3" height="4" fill="#62f808"/>
<rect x="288" y="208" width="5" height="7" fill="#ffffff"/>
<rect x="289" y="209" width="3" height="5" fill="#62f808"/>
<rect x="293" y="204" width="1" height="6" fill="#ffffff"/>
<rect x="291" y="205" width="5" height="5" fill="#ffffff"/>
<rect x="292" y="206" width="3" height="3" fill="#62f808"/>
<rect x="295" y="200" width="1" height="6" fill="#ffffff"/>
<rect x="293" y="202" width="5" height="3" fill="#ffffff"/>
<rect x="294" y="203" width="3" height="1" fill="#62f808"/>
<rect x="298" y="201" width="1" height="4" fill="#ffffff"/>
<rect x="296" y="203" width="5" height="3" fill="#ffffff"/>
<rect x="297" y="204" width="3" height="1" fill="#ff0a64"/>
<rect x="300" y="202" width="1" height="5" fill="#ffffff"/>
<rect x="298" y="202" width="5" height="3" fill="#ffffff"/>
<rect x="299" y="203" width="3" height="1" fill="#62f808"/>
<rect x="303" y="201" width="1" height="4" fill="#ffffff"/>
<rect x="301" y="202" width="5" height="3" fill="#ffffff"/>
<rect x="306" y="199" width="1" height="5" fill="#ffffff"/>
<rect x="304" y="201" width="5" height="3" fill="#ffffff"/>
<rect x="305" y="202" width="3" height="1" fill="#62f808"/>
<rect x="308" y="197" width="1" height="6" fill="#ffffff"/>
<rect x="306" y="199" width="5" height="3" fill="#ffffff"/>
<rect x="307" y="200" width="3" height="1" fill="#62f808"/>
<rect x="309" y="194" width="5" height="6" fill="#ffffff"/>
<rect x="310" y="195" width="3" height="4" fill="#62f808"/>
<rect x="313" y="192" width="1" height="6" fill="#ffffff"/>
<rect x="311" y="193" width="5" height="5" fill="#ffffff"/>
<rect x="312" y="194" width="3" height="3" fill="#ff0a64"/>
<rect x="316" y="196" width="1" height="3" fill="#ffffff"/>
<rect x="314" y="196" width="5" height="3" fill="#ffffff"/>
<rect x="315" y="197" width="3" height="1" fill="#62f808"/>
<rect x="318" y="193" width="1" height="6" fill="#ffffff"/>
<rect x="316" y="194" width="5" height="4" fill="#ffffff"/>
<rect x="317" y="195" width="3" height="2" fill="#62f808"/>
<rect x="321" y="193" width="1" height="6" fill="#ffffff"/>
<rect x="319" y="194" width="5" height="5" fill="#ffffff"/>
<rect x="320" y="195" width="3" height="3" fill="#ff0a64"/>
<rect x="323" y="195" width="1" height="4" fill="#ffffff"/>
<rect x="321" y="197" width="5" height="3" fill="#ffffff"/>
<rect x="326" y="195" width="1" height="3" fill="#ffffff"/>
<rect x="324" y="195" width="5" height="3" fill="#ffffff"/>
<rect x="328" y="190" width="1" height="9" fill="#ffffff"/>
<rect x="326" y="192" width="5" height="6" fill="#ffffff"/>
<rect x="327" y="193" width="3" height="4" fill="#62f808"/>
<rect x="329" y="176" width="5" height="6" fill="#ffffff"/>
<rect x="330" y="177" width="3" height="4" fill="#62f808"/>
<rect x="333" y="175" width="1" height="7" fill="#ffffff"/>
<rect x="331" y="176" width="5" height="5" fill="#ffffff"/>
<rect x="332" y="177" width="3" height="3" fill="#ff0a64"/>
<rect x="336" y="176" width="1" height="5" fill="#ffffff"/>
<rect x="334" y="177" width="5" height="4" fill="#ffffff"/>
<rect x="335" y="178" width="3" height="2" fill="#62f808"/>
<rect x="338" y="173" width="1" height="7" fill="#ffffff"/>
<rect x="336" y="175" width="5" height="3" fill="#ffffff"/>
<rect x="337" y="176" width="3" height="1" fill="#62f808"/>
<rect x="341" y="172" width="1" height="10" fill="#ffffff"/>
<rect x="339" y="173" width="5" height="9" fill="#ffffff"/>
<rect x="340" y="174" width="3" height="7" fill="#ff0a64"/>
<rect x="343" y="178" width="1" height="12" fill="#ffffff"/>
<rect x="341" y="181" width="5" height="6" fill="#ffffff"/>
<rect x="342" y="182" width="3" height="4" fill="#ff0a64"/>
<rect x="346" y="184" width="1" height="4" fill="#ffffff"/>
<rect x="344" y="184" width="5" height="3" fill="#ffffff"/>
<rect x="346" y="185" width="5" height="5" fill="#ffffff"/>
<rect x="347" y="186" width="3" height="3" fill="#ff0a64"/>
<rect x="349" y="190" width="5" height="3" fill="#ffffff"/>
<rect x="350" y="191" width="3" height="1" fill="#ff0a64"/>
<rect x="353" y="189" width="1" height="3" fill="#ffffff"/>
<rect x="351" y="190" width="5" height="3" fill="#ffffff"/>
<rect x="352" y="191" width="3" height="1" fill="#ff0a64"/>
<rect x="356" y="186" width="1" height="6" fill="#ffffff"/>
<rect x="354" y="187" width="5" height="5" fill="#ffffff"/>
<rect x="355" y="188" width="3" height="3" fill="#62f808"/>
<rect x="358" y="186" width="1" height="6" fill="#ffffff"/>
<rect x="356" y="187" width="5" height="5" fill="#ffffff"/>
<rect x="357" y="188" width="3" height="3" fill="#ff0a64"/>
<rect x="361" y="190" width="1" height="7" fill="#ffffff"/>
<rect x="359" y="192" width="5" height="4" fill="#ffffff"/>
<rect x="360" y="193" width="3" height="2" fill="#ff0a64"/>
<rect x="363" y="193" width="1" height="4" fill="#ffffff"/>
<rect x="361" y="194" width="5" height="3" fill="#ffffff"/>
<rect x="364" y="194" width="5" height="3" fill="#ffffff"/>
<rect x="365" y="195" width="3" height="1" fill="#62f808"/>
<rect x="368" y="192" width="1" height="10" fill="#ffffff"/>
<rect x="366" y="195" width="5" height="6" fill="#ffffff"/>
<rect x="367" y="196" width="3" height="4" fill="#ff0a64"/>
<rect x="371" y="197" width="1" height="6" fill="#ffffff"/>
<rect x="369" y="198" width="5" height="3" fill="#ffffff"/>
<rect x="373" y="196" width="1" height="5" fill="#ffffff"/>
<rect x="371" y="197" width="5" height="3" fill="#ffffff"/>
<rect x="372" y="198" width="3" height="1" fill="#ff0a64"/>
<rect x="376" y="198" width="1" height="5" fill="#ffffff"/>
<rect x="374" y="199" width="5" height="3" fill="#ffffff"/>
<rect x="375" y="200" width="3" height="1" fill="#ff0a64"/>
<rect x="376" y="201" width="5" height="4" fill="#ffffff"/>
<rect x="377" y="202" width="3" height="2" fill="#ff0a64"/>
<rect x="381" y="200" width="1" height="4" fill="#ffffff"/>
<rect x="379" y="201" width="5" height="3" fill="#ffffff"/>
<rect x="380" y="202" width="3" height="1" fill="#62f808"/>
<rect x="383" y="198" width="1" height="4" fill="#ffffff"/>
<rect x="381" y="199" width="5" height="3" fill="#ffffff"/>
<rect x="382" y="200" width="3" height="1" fill="#62f808"/>
<rect x="386" y="187" width="1" height="11" fill="#ffffff"/>
<rect x="384" y="188" width="5" height="9" fill="#ffffff"/>
<rect x="385" y="189" width="3" height="7" fill="#62f808"/>
<rect x="388" y="187" width="1" height="4" fill="#ffffff"/>
<rect x="386" y="188" width="5" height="3" fill="#ffffff"/>
<rect x="391" y="185" width="1" height="8" fill="#ffffff"/>
<rect x="389" y="187" width="5" height="3" fill="#ffffff"/>
<rect x="390" y="188" width="3" height="1" fill="#62f808"/>
<rect x="393" y="185" width="1" height="5" fill="#ffffff"/>
<rect x="391" y="186" width="5" height="3" fill="#ffffff"/>
<rect x="396" y="184" width="1" height="7" fill="#ffffff"/>
<rect x="394" y="185" width="5" height="5" fill="#ffffff"/>
<rect x="395" y="186" width="3" height="3" fill="#62f808"/>
<rect x="398" y="183" width="1" height="7" fill="#ffffff"/>
<rect x="396" y="185" width="5" height="5" fill="#ffffff"/>
<rect x="397" y="186" width="3" height="3" fill="#ff0a64"/>
<rect x="401" y="185" width="1" height="6" fill="#ffffff"/>
<rect x="399" y="186" width="5" height="4" fill="#ffffff"/>
<rect x="400" y="187" width="3" height="2" fill="#62f808"/>
<rect x="403" y="183" width="1" height="5" fill="#ffffff"/>
<rect x="401" y="184" width="5" height="3" fill="#ffffff"/>
<rect x="402" y="185" width="3" height="1" fill="#62f808"/>
<rect x="406" y="184" width="1" height="4" fill="#ffffff"/>
<rect x="404" y="183" width="5" height="3" fill="#ffffff"/>
<rect x="405" y="184" width="3" height="1" fill="#ff0a64"/>
<rect x="408" y="181" width="1" height="7" fill="#ffffff"/>
<rect x="406" y="183" width="5" height="4" fill="#ffffff"/>
<rect x="407" y="184" width="3" height="2" fill="#62f808"/>
<rect x="411" y="180" width="1" height="4" fill="#ffffff"/>
<rect x="409" y="182" width="5" height="3" fill="#ffffff"/>
<rect x="413" y="180" width="1" height="5" fill="#ffffff"/>
<rect x="411" y="182" width="5" height="3" fill="#ffffff"/>
<rect x="412" y="183" width="3" height="1" fill="#62f808"/>
<rect x="416" y="181" width="1" height="6" fill="#ffffff"/>
<rect x="414" y="182" width="5" height="5" fill="#ffffff"/>
<rect x="415" y="183" width="3" height="3" fill="#ff0a64"/>
<rect x="416" y="186" width="5" height="4" fill="#ffffff"/>
<rect x="417" y="187" width="3" height="2" fill="#ff0a64"/>
<rect x="419" y="186" width="5" height="4" fill="#ffffff"/>
<rect x="420" y="187" width="3" height="2" fill="#62f808"/>
<rect x="423" y="182" width="1" height="10" fill="#ffffff"/>
<rect x="421" y="185" width="5" height="3" fill="#ffffff"/>
<rect x="422" y="186" width="3" height="1" fill="#ff0a64"/>
<rect x="426" y="184" width="1" height="5" fill="#ffffff"/>
<rect x="424" y="185" width="5" height="3" fill="#ffffff"/>
<rect x="425" y="186" width="3" height="1" fill="#ff0a64"/>
<rect x="428" y="186" width="1" height="4" fill="#ffffff"/>
<rect x="426" y="187" width="5" height="3" fill="#ffffff"/>
<rect x="427" y="188" width="3" height="1" fill="#ff0a64"/>
<rect x="431" y="186" width="1" height="4" fill="#ffffff"/>
<rect x="429" y="188" width="5" height="3" fill="#ffffff"/>
<rect x="433" y="187" width="1" height="7" fill="#ffffff"/>
<rect x="431" y="189" width="5" height="3" fill="#ffffff"/>
<rect x="436" y="185" width="1" height="7" fill="#ffffff"/>
<rect x="434" y="187" width="5" height="4" fill="#ffffff"/>
<rect x="435" y="188" width="3" height="2" fill="#62f808"/>
<rect x="438" y="183" width="1" height="5" fill="#ffffff"/>
<rect x="436" y="184" width="5" height="3" fill="#ffffff"/>
<rect x="437" y="185" width="3" height="1" fill="#62f808"/>
<rect x="441" y="182" width="1" height="7" fill="#ffffff"/>
<rect x="439" y="185" width="5" height="4" fill="#ffffff"/>
<rect x="440" y="186" width="3" height="2" fill="#ff0a64"/>
<rect x="443" y="181" width="1" height="9" fill="#ffffff"/>
<rect x="441" y="185" width="5" height="4" fill="#ffffff"/>
<rect x="442" y="186" width="3" height="2" fill="#62f808"/>
<rect x="444" y="181" width="5" height="6" fill="#ffffff"/>
<rect x="445" y="182" width="3" height="4" fill="#62f808"/>
<rect x="448" y="179" width="1" height="7" fill="#ffffff"/>
<rect x="446" y="182" width="5" height="4" fill="#ffffff"/>
<rect x="447" y="183" width="3" height="2" fill="#ff0a64"/>
<rect x="449" y="186" width="5" height="3" fill="#ffffff"/>
<rect x="450" y="187" width="3" height="1" fill="#ff0a64"/>
<rect x="453" y="186" width="1" height="5" fill="#ffffff"/>
<rect x="451" y="187" width="5" height="3" fill="#ffffff"/>
<rect x="456" y="188" width="1" height="3" fill="#ffffff"/>
<rect x="454" y="188" width="5" height="3" fill="#ffffff"/>
<rect x="455" y="189" width="3" height="1" fill="#62f808"/>
<rect x="458" y="186" width="1" height="5" fill="#ffffff"/>
<rect x="456" y="189" width="5" height="3" fill="#ffffff"/>
<rect x="461" y="189" width="1" height="6" fill="#ffffff"/>
<rect x="459" y="189" width="5" height="3" fill="#ffffff"/>
<rect x="460" y="190" width="3" height="1" fill="#62f808"/>
<rect x="463" y="186" width="1" height="5" fill="#ffffff"/>
<rect x="461" y="188" width="5" height="3" fill="#ffffff"/>
<rect x="462" y="189" width="3" height="1" fill="#ff0a64"/>
<rect x="466" y="189" width="1" height="4" fill="#ffffff"/>
<rect x="464" y="189" width="5" height="3" fill="#ffffff"/>
<rect x="465" y="190" width="3" height="1" fill="#62f808"/>
<rect x="468" y="189" width="1" height="4" fill="#ffffff"/>
<rect x="466" y="190" width="5" height="3" fill="#ffffff"/>
<rect x="467" y="191" width="3" height="1" fill="#ff0a64"/>
<rect x="471" y="190" width="1" height="5" fill="#ffffff"/>
<rect x="469" y="191" width="5" height="3" fill="#ffffff"/>
<rect x="473" y="191" width="1" height="3" fill="#ffffff"/>
<rect x="471" y="192" width="5" height="3" fill="#ffffff"/>
<rect x="472" y="193" width="3" height="1" fill="#ff0a64"/>
<rect x="476" y="190" width="1" height="4" fill="#ffffff"/>
<rect x="474" y="191" width="5" height="3" fill="#ffffff"/>
<rect x="475" y="192" width="3" height="1" fill="#62f808"/>
<rect x="478" y="192" width="1" height="2" fill="#ffffff"/>
<rect x="476" y="192" width="5" height="3" fill="#ffffff"/>
<rect x="477" y="193" width="3" height="1" fill="#ff0a64"/>
<rect x="481" y="191" width="1" height="6" fill="#ffffff"/>
<rect x="479" y="193" width="5" height="3" fill="#ffffff"/>
<rect x="480" y="194" width="3" height="1" fill="#62f808"/>
<rect x="483" y="188" width="1" height="5" fill="#ffffff"/>
<rect x="481" y="191" width="5" height="3" fill="#ffffff"/>
<rect x="486" y="189" width="1" height="3" fill="#ffffff"/>
<rect x="484" y="190" width="5" height="3" fill="#ffffff"/>
<rect x="486" y="189" width="5" height="3" fill="#ffffff"/>
<rect x="487" y="190" width="3" height="1" fill="#62f808"/>
<rect x="491" y="186" width="1" height="5" fill="#ffffff"/>
<rect x="489" y="187" width="5" height="4" fill="#ffffff"/>
<rect x="490" y="188" width="3" height="2" fill="#62f808"/>
<rect x="493" y="184" width="1" height="5" fill="#ffffff"/>
<rect x="491" y="186" width="5" height="3" fill="#ffffff"/>
<rect x="492" y="187" width="3" height="1" fill="#62f808"/>
<rect x="496" y="186" width="1" height="3" fill="#ffffff"/>
<rect x="494" y="186" width="5" height="3" fill="#ffffff"/>
<rect x="495" y="187" width="3" height="1" fill="#ff0a64"/>
<rect x="496" y="185" width="5" height="4" fill="#ffffff"/>
<rect x="497" y="186" width="3" height="2" fill="#62f808"/>
<rect x="499" y="185" width="5" height="4" fill="#ffffff"/>
<rect x="500" y="186" width="3" height="2" fill="#ff0a64"/>
<rect x="503" y="183" width="1" height="9" fill="#ffffff"/>
<rect x="501" y="186" width="5" height="3" fill="#ffffff"/>
<rect x="502" y="187" width="3" height="1" fill="#62f808"/>
<rect x="506" y="177" width="1" height="12" fill="#ffffff"/>
<rect x="504" y="179" width="5" height="9" fill="#ffffff"/>
<rect x="505" y="180" width="3" height="7" fill="#62f808"/>
<rect x="508" y="173" width="1" height="10" fill="#ffffff"/>
<rect x="506" y="174" width="5" height="5" fill="#ffffff"/>
<rect x="507" y="175" width="3" height="3" fill="#62f808"/>
<rect x="511" y="168" width="1" height="8" fill="#ffffff"/>
<rect x="509" y="171" width="5" height="4" fill="#ffffff"/>
<rect x="510" y="172" width="3" height="2" fill="#62f808"/>
<rect x="513" y="167" width="1" height="4" fill="#ffffff"/>
<rect x="511" y="168" width="5" height="3" fill="#ffffff"/>
<rect x="512" y="169" width="3" height="1" fill="#62f808"/>
<rect x="516" y="163" width="1" height="7" fill="#ffffff"/>
<rect x="514" y="165" width="5" height="4" fill="#ffffff"/>
<rect x="515" y="166" width="3" height="2" fill="#62f808"/>
<rect x="518" y="163" width="1" height="4" fill="#ffffff"/>
<rect x="516" y="164" width="5" height="3" fill="#ffffff"/>
<rect x="517" y="165" width="3" height="1" fill="#ff0a64"/>
<rect x="521" y="159" width="1" height="6" fill="#ffffff"/>
<rect x="519" y="163" width="5" height="3" fill="#ffffff"/>
<rect x="523" y="160" width="1" height="8" fill="#ffffff"/>
<rect x="521" y="163" width="5" height="3" fill="#ffffff"/>
<rect x="522" y="164" width="3" height="1" fill="#ff0a64"/>
<rect x="526" y="161" width="1" height="8" fill="#ffffff"/>
<rect x="524" y="165" width="5" height="3" fill="#ffffff"/>
<rect x="525" y="166" width="3" height="1" fill="#ff0a64"/>
<rect x="528" y="161" width="1" height="15" fill="#ffffff"/>
<rect x="526" y="164" width="5" height="9" fill="#ffffff"/>
<rect x="527" y="165" width="3" height="7" fill="#62f808"/>
<rect x="531" y="164" width="1" height="4" fill="#ffffff"/>
<rect x="529" y="164" width="5" height="3" fill="#ffffff"/>
<rect x="530" y="165" width="3" height="1" fill="#62f808"/>
<rect x="533" y="159" width="1" height="9" fill="#ffffff"/>
<rect x="531" y="161" width="5" height="5" fill="#ffffff"/>
<rect x="532" y="162" width="3" height="3" fill="#62f808"/>
<rect x="536" y="158" width="1" height="6" fill="#ffffff"/>
<rect x="534" y="159" width="5" height="4" fill="#ffffff"/>
<rect x="535" y="160" width="3" height="2" fill="#62f808"/>
<rect x="538" y="158" width="1" height="4" fill="#ffffff"/>
<rect x="536" y="159" width="5" height="3" fill="#ffffff"/>
<rect x="537" y="160" width="3" height="1" fill="#ff0a64"/>
<rect x="541" y="149" width="1" height="13" fill="#ffffff"/>
<rect x="539" y="152" width="5" height="10" fill="#ffffff"/>
<rect x="540" y="153" width="3" height="8" fill="#62f808"/>
<rect x="543" y="149" width="1" height="8" fill="#ffffff"/>
<rect x="541" y="152" width="5" height="5" fill="#ffffff"/>
<rect x="542" y="153" width="3" height="3" fill="#ff0a64"/>
<rect x="546" y="152" width="1" height="3" fill="#ffffff"/>
<rect x="544" y="153" width="5" height="3" fill="#ffffff"/>
<rect x="545" y="154" width="3" height="1" fill="#62f808"/>
<rect x="548" y="150" width="1" height="7" fill="#ffffff"/>
<rect x="546" y="153" width="5" height="3" fill="#ffffff"/>
<rect x="547" y="154" width="3" height="1" fill="#62f808"/>
<rect x="551" y="150" width="1" height="7" fill="#ffffff"/>
<rect x="549" y="152" width="5" height="3" fill="#ffffff"/>
<rect x="553" y="149" width="1" height="12" fill="#ffffff"/>
<rect x="551" y="152" width="5" height="7" fill="#ffffff"/>
<rect x="552" y="153" width="3" height="5" fill="#ff0a64"/>
<rect x="556" y="145" width="1" height="16" fill="#ffffff"/>
<rect x="554" y="148" width="5" height="12" fill="#ffffff"/>
<rect x="555" y="149" width="3" height="10" fill="#62f808"/>
<rect x="559" y="141" width="1" height="11" fill="#ffffff"/>
<rect x="557" y="144" width="5" height="5" fill="#ffffff"/>
<rect x="558" y="145" width="3" height="3" fill="#62f808"/>
<rect x="561" y="138" width="1" height="8" fill="#ffffff"/>
<rect x="559" y="141" width="5" height="3" fill="#ffffff"/>
<rect x="560" y="142" width="3" height="1" fill="#ff0a64"/>
<rect x="564" y="136" width="1" height="12" fill="#ffffff"/>
<rect x="562" y="140" width="5" height="5" fill="#ffffff"/>
<rect x="563" y="141" width="3" height="3" fill="#62f808"/>
<rect x="566" y="136" width="1" height="7" fill="#ffffff"/>
<rect x="564" y="137" width="5" height="3" fill="#ffffff"/>
<rect x="569" y="126" width="1" height="15" fill="#ffffff"/>
<rect x="567" y="128" width="5" height="12" fill="#ffffff"/>
<rect x="568" y="129" width="3" height="10" fill="#62f808"/>
<rect x="571" y="126" width="1" height="4" fill="#ffffff"/>
<rect x="569" y="128" width="5" height="3" fill="#ffffff"/>
<rect x="574" y="124" width="1" height="10" fill="#ffffff"/>
<rect x="572" y="125" width="5" height="4" fill="#ffffff"/>
<rect x="573" y="126" width="3" height="2" fill="#62f808"/>
<rect x="576" y="119" width="1" height="10" fill="#ffffff"/>
<rect x="574" y="121" width="5" height="6" fill="#ffffff"/>
<rect x="575" y="122" width="3" height="4" fill="#62f808"/>
<rect x="579" y="116" width="1" height="8" fill="#ffffff"/>
<rect x="577" y="120" width="5" height="3" fill="#ffffff"/>
<rect x="578" y="121" width="3" height="1" fill="#ff0a64"/>
<rect x="581" y="119" width="1" height="8" fill="#ffffff"/>
<rect x="579" y="121" width="5" height="3" fill="#ffffff"/>
<rect x="580" y="122" width="3" height="1" fill="#ff0a64"/>
<rect x="584" y="121" width="1" height="14" fill="#ffffff"/>
<rect x="582" y="125" width="5" height="6" fill="#ffffff"/>
<rect x="583" y="126" width="3" height="4" fill="#ff0a64"/>
<rect x="586" y="128" width="1" height="3" fill="#ffffff"/>
<rect x="584" y="129" width="5" height="3" fill="#ffffff"/>
<rect x="589" y="113" width="1" height="15" fill="#ffffff"/>
<rect x="587" y="117" width="5" height="10" fill="#ffffff"/>
<rect x="588" y="118" width="3" height="8" fill="#62f808"/>
<rect x="591" y="104" width="1" height="16" fill="#ffffff"/>
<rect x="589" y="109" width="5" height="8" fill="#ffffff"/>
<rect x="590" y="110" width="3" height="6" fill="#62f808"/>
<rect x="594" y="110" width="1" height="8" fill="#ffffff"/>
<rect x="592" y="111" width="5" height="5" fill="#ffffff"/>
<rect x="593" y="112" width="3" height="3" fill="#ff0a64"/>
<rect x="596" y="107" width="1" height="10" fill="#ffffff"/>
<rect x="594" y="109" width="5" height="6" fill="#ffffff"/>
<rect x="595" y="110" width="3" height="4" fill="#62f808"/>
<rect x="599" y="104" width="1" height="12" fill="#ffffff"/>
<rect x="597" y="109" width="5" height="3" fill="#ffffff"/>
<rect x="598" y="110" width="3" height="1" fill="#ff0a64"/>
<rect x="601" y="104" width="1" height="11" fill="#ffffff"/>
<rect x="599" y="107" width="5" height="3" fill="#ffffff"/>
<rect x="600" y="108" width="3" height="1" fill="#62f808"/>
<rect x="604" y="108" width="1" height="14" fill="#ffffff"/>
<rect x="602" y="113" width="5" height="6" fill="#ffffff"/>
<rect x="603" y="114" width="3" height="4" fill="#ff0a64"/>
<rect x="606" y="116" width="1" height="4" fill="#ffffff"/>
<rect x="604" y="117" width="5" height="3" fill="#ffffff"/>
<rect x="609" y="114" width="1" height="21" fill="#ffffff"/>
<rect x="607" y="118" width="5" height="14" fill="#ffffff"/>
<rect x="608" y="119" width="3" height="12" fill="#ff0a64"/>
<rect x="611" y="129" width="1" height="18" fill="#ffffff"/>
<rect x="609" y="132" width="5" height="11" fill="#ffffff"/>
<rect x="610" y="133" width="3" height="9" fill="#ff0a64"/>
<rect x="614" y="139" width="1" height="8" fill="#ffffff"/>
<rect x="612" y="141" width="5" height="3" fill="#ffffff"/>
<rect x="613" y="142" width="3" height="1" fill="#62f808"/>
<rect x="616" y="135" width="1" height="11" fill="#ffffff"/>
<rect x="614" y="139" width="5" height="3" fill="#ffffff"/>
<rect x="619" y="136" width="1" height="14" fill="#ffffff"/>
<rect x="617" y="139" width="5" height="7" fill="#ffffff"/>
<rect x="618" y="140" width="3" height="5" fill="#ff0a64"/>
<rect x="621" y="152" width="1" height="14" fill="#ffffff"/>
<rect x="619" y="153" width="5" height="11" fill="#ffffff"/>
<rect x="620" y="154" width="3" height="9" fill="#ff0a64"/>
<rect x="624" y="154" width="1" height="12" fill="#ffffff"/>
<rect x="622" y="156" width="5" height="8" fill="#ffffff"/>
<rect x="623" y="157" width="3" height="6" fill="#62f808"/>
<rect x="626" y="151" width="1" height="10" fill="#ffffff"/>
<rect x="624" y="153" width="5" height="6" fill="#ffffff"/>
<rect x="625" y="154" width="3" height="4" fill="#ff0a64"/>
<rect x="629" y="155" width="1" height="10" fill="#ffffff"/>
<rect x="627" y="158" width="5" height="4" fill="#ffffff"/>
<rect x="628" y="159" width="3" height="2" fill="#ff0a64"/>
<rect x="631" y="158" width="1" height="5" fill="#ffffff"/>
<rect x="629" y="159" width="5" height="4" fill="#ffffff"/>
<rect x="630" y="160" width="3" height="2" fill="#62f808"/>
<rect x="634" y="157" width="1" height="9" fill="#ffffff"/>
<rect x="632" y="160" width="5" height="3" fill="#ffffff"/>
<rect x="633" y="161" width="3" height="1" fill="#ff0a64"/>
<rect x="636" y="159" width="1" height="5" fill="#ffffff"/>
<rect x="634" y="160" width="5" height="3" fill="#ffffff"/>
<rect x="635" y="161" width="3" height="1" fill="#62f808"/>
<rect x="639" y="158" width="1" height="4" fill="#ffffff"/>
<rect x="637" y="159" width="5" height="3" fill="#ffffff"/>
<rect x="638" y="160" width="3" height="1" fill="#ff0a64"/>
<rect x="641" y="157" width="1" height="7" fill="#ffffff"/>
<rect x="639" y="158" width="5" height="4" fill="#ffffff"/>
<rect x="640" y="159" width="3" height="2" fill="#ff0a64"/>
<rect x="644" y="156" width="1" height="7" fill="#ffffff"/>
<rect x="642" y="160" width="5" height="3" fill="#ffffff"/>
<rect x="643" y="161" width="3" height="1" fill="#ff0a64"/>
<rect x="646" y="159" width="1" height="8" fill="#ffffff"/>
<rect x="644" y="161" width="5" height="3" fill="#ffffff"/>
<rect x="649" y="157" width="1" height="12" fill="#ffffff"/>
<rect x="647" y="162" width="5" height="6" fill="#ffffff"/>
<rect x="648" y="163" width="3" height="4" fill="#ff0a64"/>
<rect x="649" y="165" width="5" height="4" fill="#ffffff"/>
<rect x="650" y="166" width="3" height="2" fill="#62f808"/>
<rect x="654" y="159" width="1" height="6" fill="#ffffff"/>
<rect x="652" y="161" width="5" height="5" fill="#ffffff"/>
<rect x="653" y="162" width="3" height="3" fill="#62f808"/>
<rect x="656" y="159" width="1" height="7" fill="#ffffff"/>
<rect x="654" y="160" width="5" height="4" fill="#ffffff"/>
<rect x="655" y="161" width="3" height="2" fill="#62f808"/>
<rect x="659" y="152" width="1" height="12" fill="#ffffff"/>
<rect x="657" y="154" width="5" height="7" fill="#ffffff"/>
<rect x="658" y="155" width="3" height="5" fill="#62f808"/>
<rect x="661" y="146" width="1" height="9" fill="#ffffff"/>
<rect x="659" y="149" width="5" height="5" fill="#ffffff"/>
<rect x="660" y="150" width="3" height="3" fill="#62f808"/>
<rect x="664" y="147" width="1" height="7" fill="#ffffff"/>
<rect x="662" y="149" width="5" height="3" fill="#ffffff"/>
<rect x="663" y="150" width="3" height="1" fill="#ff0a64"/>
<rect x="666" y="150" width="1" height="7" fill="#ffffff"/>
<rect x="664" y="151" width="5" height="6" fill="#ffffff"/>
<rect x="665" y="152" width="3" height="4" fill="#ff0a64"/>
<rect x="669" y="159" width="1" height="12" fill="#ffffff"/>
<rect x="667" y="162" width="5" height="6" fill="#ffffff"/>
<rect x="668" y="163" width="3" height="4" fill="#ff0a64"/>
<rect x="671" y="163" width="1" height="8" fill="#ffffff"/>
<rect x="669" y="166" width="5" height="3" fill="#ffffff"/>
<rect x="674" y="169" width="1" height="10" fill="#ffffff"/>
<rect x="672" y="170" width="5" height="6" fill="#ffffff"/>
<rect x="673" y="171" width="3" height="4" fill="#ff0a64"/>
<rect x="676" y="173" width="1" height="6" fill="#ffffff"/>
<rect x="674" y="174" width="5" height="3" fill="#ffffff"/>
<rect x="675" y="175" width="3" height="1" fill="#62f808"/>
<rect x="679" y="173" width="1" height="4" fill="#ffffff"/>
<rect x="677" y="173" width="5" height="3" fill="#ffffff"/>
<rect x="678" y="174" width="3" height="1" fill="#ff0a64"/>
<rect x="681" y="168" width="1" height="10" fill="#ffffff"/>
<rect x="679" y="172" width="5" height="5" fill="#ffffff"/>
<rect x="680" y="173" width="3" height="3" fill="#62f808"/>
<rect x="684" y="169" width="1" height="8" fill="#ffffff"/>
<rect x="682" y="171" width="5" height="3" fill="#ffffff"/>
<rect x="686" y="167" width="1" height="8" fill="#ffffff"/>
<rect x="684" y="170" width="5" height="3" fill="#ffffff"/>
<rect x="685" y="171" width="3" height="1" fill="#62f808"/>
<rect x="689" y="167" width="1" height="6" fill="#ffffff"/>
<rect x="687" y="167" width="5" height="3" fill="#ffffff"/>
<rect x="688" y="168" width="3" height="1" fill="#62f808"/>
<rect x="691" y="160" width="1" height="11" fill="#ffffff"/>
<rect x="689" y="165" width="5" height="4" fill="#ffffff"/>
<rect x="690" y="166" width="3" height="2" fill="#62f808"/>
<rect x="694" y="163" width="1" height="5" fill="#ffffff"/>
<rect x="692" y="164" width="5" height="3" fill="#ffffff"/>
<rect x="693" y="165" width="3" height="1" fill="#ff0a64"/>
<rect x="696" y="163" width="1" height="5" fill="#ffffff"/>
<rect x="694" y="165" width="5" height="3" fill="#ffffff"/>
<rect x="695" y="166" width="3" height="1" fill="#ff0a64"/>
<rect x="699" y="161" width="1" height="9" fill="#ffffff"/>
<rect x="697" y="165" width="5" height="4" fill="#ffffff"/>
<rect x="698" y="166" width="3" height="2" fill="#62f808"/>
<rect x="701" y="162" width="1" height="4" fill="#ffffff"/>
<rect x="699" y="162" width="5" height="3" fill="#ffffff"/>
<rect x="700" y="163" width="3" height="1" fill="#62f808"/>
<rect x="704" y="154" width="1" height="12" fill="#ffffff"/>
<rect x="702" y="157" width="5" height="8" fill="#ffffff"/>
<rect x="703" y="158" width="3" height="6" fill="#62f808"/>
<rect x="706" y="155" width="1" height="8" fill="#ffffff"/>
<rect x="704" y="156" width="5" height="3" fill="#ffffff"/>
<rect x="709" y="153" width="1" height="9" fill="#ffffff"/>
<rect x="707" y="157" width="5" height="3" fill="#ffffff"/>
<rect x="708" y="158" width="3" height="1" fill="#ff0a64"/>
<rect x="711" y="157" width="1" height="5" fill="#ffffff"/>
<rect x="709" y="159" width="5" height="3" fill="#ffffff"/>
<rect x="710" y="160" width="3" height="1" fill="#ff0a64"/>
<rect x="714" y="159" width="1" height="6" fill="#ffffff"/>
<rect x="712" y="161" width="5" height="3" fill="#ffffff"/>
<rect x="716" y="157" width="1" height="11" fill="#ffffff"/>
<rect x="714" y="161" width="5" height="3" fill="#ffffff"/>
<rect x="715" y="162" width="3" height="1" fill="#ff0a64"/>
<rect x="719" y="162" width="1" height="5" fill="#ffffff"/>
<rect x="717" y="163" width="5" height="3" fill="#ffffff"/>
<rect x="721" y="158" width="1" height="9" fill="#ffffff"/>
<rect x="719" y="160" width="5" height="5" fill="#ffffff"/>
<rect x="720" y="161" width="3" height="3" fill="#62f808"/>
<rect x="724" y="159" width="1" height="6" fill="#ffffff"/>
<rect x="722" y="160" width="5" height="5" fill="#ffffff"/>
<rect x="723" y="161" width="3" height="3" fill="#ff0a64"/>
<rect x="726" y="161" width="1" height="3" fill="#ffffff"/>
<rect x="724" y="162" width="5" height="3" fill="#ffffff"/>
<rect x="725" y="163" width="3" height="1" fill="#62f808"/>
<rect x="729" y="160" width="1" height="8" fill="#ffffff"/>
<rect x="727" y="162" width="5" height="3" fill="#ffffff"/>
<rect x="728" y="163" width="3" height="1" fill="#ff0a64"/>
<rect x="731" y="154" width="1" height="13" fill="#ffffff"/>
<rect x="729" y="157" width="5" height="9" fill="#ffffff"/>
<rect x="730" y="158" width="3" height="7" fill="#62f808"/>
<rect x="734" y="151" width="1" height="10" fill="#ffffff"/>
<rect x="732" y="152" width="5" height="8" fill="#ffffff"/>
<rect x="733" y="153" width="3" height="6" fill="#62f808"/>
<rect x="736" y="153" width="1" height="3" fill="#ffffff"/>
<rect x="734" y="153" width="5" height="3" fill="#ffffff"/>
<rect x="739" y="150" width="1" height="10" fill="#ffffff"/>
<rect x="737" y="152" width="5" height="3" fill="#ffffff"/>
<rect x="738" y="153" width="3" height="1" fill="#62f808"/>
<rect x="741" y="150" width="1" height="6" fill="#ffffff"/>
<rect x="739" y="152" width="5" height="3" fill="#ffffff"/>
<rect x="740" y="153" width="3" height="1" fill="#62f808"/>
<rect x="744" y="146" width="1" height="12" fill="#ffffff"/>
<rect x="742" y="151" width="5" height="3" fill="#ffffff"/>
<rect x="746" y="147" width="1" height="9" fill="#ffffff"/>
<rect x="744" y="151" width="5" height="3" fill="#ffffff"/>
<rect x="745" y="152" width="3" height="1" fill="#ff0a64"/>
<rect x="749" y="144" width="1" height="13" fill="#ffffff"/>
<rect x="747" y="144" width="5" height="12" fill="#ffffff"/>
<rect x="748" y="145" width="3" height="10" fill="#62f808"/>
<rect x="751" y="139" width="1" height="10" fill="#ffffff"/>
<rect x="749" y="144" width="5" height="3" fill="#ffffff"/>
<rect x="750" y="145" width="3" height="1" fill="#ff0a64"/>
<rect x="754" y="145" width="1" height="7" fill="#ffffff"/>
<rect x="752" y="146" width="5" height="3" fill="#ffffff"/>
<rect x="753" y="147" width="3" height="1" fill="#ff0a64"/>
<rect x="756" y="148" width="1" height="4" fill="#ffffff"/>
<rect x="754" y="149" width="5" height="3" fill="#ffffff"/>
<rect x="755" y="150" width="3" height="1" fill="#ff0a64"/>
<rect x="759" y="146" width="1" height="6" fill="#ffffff"/>
<rect x="757" y="148" width="5" height="4" fill="#ffffff"/>
<rect x="758" y="149" width="3" height="2" fill="#62f808"/>
<rect x="761" y="146" width="1" height="8" fill="#ffffff"/>
<rect x="759" y="148" width="5" height="3" fill="#ffffff"/>
<rect x="760" y="149" width="3" height="1" fill="#ff0a64"/>
<rect x="764" y="147" width="1" height="9" fill="#ffffff"/>
<rect x="762" y="150" width="5" height="5" fill="#ffffff"/>
<rect x="763" y="151" width="3" height="3" fill="#ff0a64"/>
<rect x="766" y="153" width="1" height="9" fill="#ffffff"/>
<rect x="764" y="155" width="5" height="6" fill="#ffffff"/>
<rect x="765" y="156" width="3" height="4" fill="#ff0a64"/>
<rect x="769" y="164" width="1" height="4" fill="#ffffff"/>
<rect x="767" y="165" width="5" height="3" fill="#ffffff"/>
<rect x="768" y="166" width="3" height="1" fill="#ff0a64"/>
<rect x="771" y="164" width="1" height="4" fill="#ffffff"/>
<rect x="769" y="165" width="5" height="3" fill="#ffffff"/>
<rect x="770" y="166" width="3" height="1" fill="#62f808"/>
<rect x="774" y="172" width="1" height="8" fill="#ffffff"/>
<rect x="772" y="175" width="5" height="6" fill="#ffffff"/>
<rect x="773" y="176" width="3" height="4" fill="#ff0a64"/>
<rect x="776" y="178" width="1" height="4" fill="#ffffff"/>
<rect x="774" y="178" width="5" height="3" fill="#ffffff"/>
<rect x="779" y="175" width="1" height="6" fill="#ffffff"/>
<rect x="777" y="178" width="5" height="3" fill="#ffffff"/>
<rect x="781" y="179" width="1" height="2" fill="#ffffff"/>
<rect x="779" y="179" width="5" height="3" fill="#ffffff"/>
<rect x="784" y="178" width="1" height="8" fill="#ffffff"/>
<rect x="782" y="181" width="5" height="4" fill="#ffffff"/>
<rect x="783" y="182" width="3" height="2" fill="#ff0a64"/>
<rect x="786" y="179" width="1" height="7" fill="#ffffff"/>
<rect x="784" y="181" width="5" height="3" fill="#ffffff"/>
<rect x="785" y="182" width="3" height="1" fill="#62f808"/>
<rect x="789" y="178" width="1" height="5" fill="#ffffff"/>
<rect x="787" y="180" width="5" height="3" fill="#ffffff"/>
<rect x="791" y="178" width="1" height="6" fill="#ffffff"/>
<rect x="789" y="181" width="5" height="3" fill="#ffffff"/>
<rect x="790" y="182" width="3" height="1" fill="#62f808"/>
<rect x="794" y="180" width="1" height="5" fill="#ffffff"/>
<rect x="792" y="182" width="5" height="3" fill="#ffffff"/>
<rect x="796" y="180" width="1" height="7" fill="#ffffff"/>
<rect x="794" y="182" width="5" height="5" fill="#ffffff"/>
<rect x="795" y="183" width="3" height="3" fill="#ff0a64"/>
<rect x="799" y="184" width="1" height="7" fill="#ffffff"/>
<rect x="797" y="187" width="5" height="3" fill="#ffffff"/>
<rect x="798" y="188" width="3" height="1" fill="#ff0a64"/>
<rect x="801" y="191" width="1" height="17" fill="#ffffff"/>
<rect x="799" y="192" width="5" height="9" fill="#ffffff"/>
<rect x="800" y="193" width="3" height="7" fill="#ff0a64"/>
<rect x="804" y="193" width="1" height="8" fill="#ffffff"/>
<rect x="802" y="195" width="5" height="6" fill="#ffffff"/>
<rect x="803" y="196" width="3" height="4" fill="#62f808"/>
<rect x="806" y="192" width="1" height="7" fill="#ffffff"/>
<rect x="804" y="195" width="5" height="3" fill="#ffffff"/>
<rect x="805" y="196" width="3" height="1" fill="#ff0a64"/>
<rect x="807" y="196" width="5" height="3" fill="#ffffff"/>
<rect x="810" y="196" width="5" height="3" fill="#ffffff"/>
<rect x="811" y="197" width="3" height="1" fill="#ff0a64"/>
<rect x="814" y="195" width="1" height="4" fill="#ffffff"/>
<rect x="812" y="195" width="5" height="3" fill="#ffffff"/>
<rect x="817" y="195" width="1" height="5" fill="#ffffff"/>
<rect x="815" y="197" width="5" height="4" fill="#ffffff"/>
<rect x="816" y="198" width="3" height="2" fill="#ff0a64"/>
<rect x="819" y="200" width="1" height="8" fill="#ffffff"/>
<rect x="817" y="201" width="5" height="6" fill="#ffffff"/>
<rect x="818" y="202" width="3" height="4" fill="#ff0a64"/>
<rect x="820" y="204" width="5" height="6" fill="#ffffff"/>
<rect x="821" y="205" width="3" height="4" fill="#ff0a64"/>
<rect x="824" y="206" width="1" height="7" fill="#ffffff"/>
<rect x="822" y="208" width="5" height="5" fill="#ffffff"/>
<rect x="823" y="209" width="3" height="3" fill="#ff0a64"/>
<rect x="825" y="210" width="5" height="5" fill="#ffffff"/>
<rect x="826" y="211" width="3" height="3" fill="#62f808"/>
<rect x="829" y="205" width="1" height="8" fill="#ffffff"/>
<rect x="827" y="207" width="5" height="5" fill="#ffffff"/>
<rect x="828" y="208" width="3" height="3" fill="#62f808"/>
<rect x="832" y="205" width="1" height="6" fill="#ffffff"/>
<rect x="830" y="207" width="5" height="3" fill="#ffffff"/>
<rect x="831" y="208" width="3" height="1" fill="#ff0a64"/>
<rect x="834" y="209" width="1" height="6" fill="#ffffff"/>
<rect x="832" y="211" width="5" height="4" fill="#ffffff"/>
<rect x="833" y="212" width="3" height="2" fill="#62f808"/>
<rect x="837" y="207" width="1" height="4" fill="#ffffff"/>
<rect x="835" y="208" width="5" height="3" fill="#ffffff"/>
<rect x="836" y="209" width="3" height="1" fill="#ff0a64"/>
<rect x="839" y="205" width="1" height="4" fill="#ffffff"/>
<rect x="837" y="205" width="5" height="3" fill="#ffffff"/>
<rect x="838" y="206" width="3" height="1" fill="#62f808"/>
<rect x="840" y="204" width="5" height="3" fill="#ffffff"/>
<rect x="841" y="205" width="3" height="1" fill="#ff0a64"/>
<rect x="844" y="205" width="1" height="9" fill="#ffffff"/>
<rect x="842" y="207" width="5" height="6" fill="#ffffff"/>
<rect x="843" y="208" width="3" height="4" fill="#ff0a64"/>
<rect x="847" y="219" width="1" height="6" fill="#ffffff"/>
<rect x="845" y="220" width="5" height="5" fill="#ffffff"/>
<rect x="846" y="221" width="3" height="3" fill="#62f808"/>
<rect x="849" y="217" width="1" height="5" fill="#ffffff"/>
<rect x="847" y="220" width="5" height="3" fill="#ffffff"/>
<rect x="848" y="221" width="3" height="1" fill="#62f808"/>
</g>
<polyline points="55.6,350.6 68.0,352.5 77.8,351.9 88.9,347.8 100.0,342.8 108.3,336.7 116.7,330.6 125.0,326.4 133.3,325.0 141.7,327.8 150.0,333.3 158.3,338.1 163.9,339.4 172.2,332.5 180.6,328.3 188.9,328.9 194.4,328.9 202.8,325.6 211.1,317.2 219.4,306.1 227.8,295.0 235.6,288.1 241.7,292.2 245.0,295.6 250.6,304.7 258.9,320.0 267.2,332.5 275.6,343.6 283.9,354.7 290.0,358.3 296.4,353.3 303.3,345.0 311.7,335.3 320.0,329.7 328.3,325.6 336.7,314.4 343.6,308.3 349.2,310.3 356.1,317.2 364.4,326.9 372.8,338.1 381.1,346.4 386.7,350.6 392.2,347.8 400.6,343.6 408.9,338.1 417.2,333.9 425.6,334.4 433.9,338.1 442.0,341.5 451.1,339.8 462.2,344.8 473.3,352.3 481.7,357.8 488.6,360.6 495.6,357.8 503.9,352.3 512.2,341.2 520.6,327.3 528.9,314.8 537.2,306.4 545.6,301.4 553.9,300.3 562.2,297.6 570.6,291.2 578.9,281.4 587.2,276.4 595.6,271.7 602.5,268.9 608.1,274.5 615.0,289.8 618.1,300.0 623.6,322.2 630.6,350.0 636.1,366.7 643.1,380.6 650.0,388.9 656.9,392.5 663.9,388.3 671.7,380.6 679.2,385.6 687.5,390.3 695.8,386.1 705.6,377.8 713.9,365.3 722.2,357.8 733.3,352.8 741.7,344.4 750.0,334.7 756.9,330.0 763.9,329.2 769.4,334.7 777.8,350.0 786.1,369.4 794.4,384.7 800.0,391.1 804.7,400.0 811.7,406.9 820.0,411.1 828.3,415.3 836.7,416.1 843.6,413.3 849.7,411.9" fill="none" stroke="#ff1010" stroke-width="1" shape-rendering="crispEdges"/>
<polyline points="55.6,351.1 68.0,354.2 77.8,350.6 88.9,345.0 100.0,335.3 108.3,328.3 116.7,323.3 125.0,323.3 133.3,324.2 138.9,328.3 144.4,336.7 152.8,343.6 158.3,344.4 163.9,339.4 169.4,326.9 175.0,323.3 180.6,325.6 188.9,331.1 194.4,329.7 201.4,321.4 208.3,314.4 213.9,300.6 218.1,296.4 223.6,285.3 230.6,280.6 234.7,281.7 240.3,295.0 245.0,306.1 250.6,322.8 258.9,335.3 267.2,342.8 272.8,349.2 278.3,360.3 286.1,368.6 290.8,361.7 296.4,349.2 303.3,336.7 311.7,322.8 320.0,324.2 327.8,321.4 333.9,303.3 340.0,297.8 345.0,306.1 351.9,320.0 358.9,328.3 367.2,342.2 375.6,353.3 381.1,357.5 386.7,350.6 392.2,342.2 400.6,338.1 406.1,331.1 411.7,327.5 417.2,332.5 425.6,338.1 432.5,344.4 439.4,342.8 448.3,337.6 456.7,343.9 465.0,350.9 476.1,362.0 483.1,367.6 490.0,359.2 498.3,350.3 506.7,339.8 515.0,318.9 520.6,307.8 528.9,303.7 537.2,298.1 544.2,295.3 549.7,297.6 553.9,302.3 559.4,295.9 566.4,289.8 571.9,275.9 577.5,268.9 581.7,270.3 586.7,275.9 591.4,267.6 599.7,264.8 603.9,268.9 609.4,289.8 611.1,300.0 615.3,322.2 620.8,350.0 626.4,375.0 631.9,390.3 637.5,397.2 641.7,394.4 650.0,400.0 655.6,397.2 661.1,383.3 666.1,368.1 670.8,377.8 677.8,390.3 683.3,395.8 688.9,391.7 695.8,380.6 701.4,372.2 706.9,358.3 713.9,352.8 722.2,352.2 730.6,350.8 736.1,341.7 741.7,333.3 747.2,329.2 751.4,321.7 755.6,324.4 761.1,327.8 766.7,338.9 772.2,355.6 777.8,376.4 783.3,390.3 788.9,396.7 794.4,398.6 800.6,406.9 804.7,414.4 811.7,413.9 817.2,412.5 822.8,417.2 826.9,421.4 832.5,418.1 838.1,412.5 842.8,406.9 846.4,408.3 849.7,411.7" fill="none" stroke="#10f010" stroke-width="1" shape-rendering="crispEdges"/>
</svg>
<div id="div"></div>
<div id="leg"><span style="color:#ff9000">MACD Histogram</span><span style="color:#888;margin-right:2px">,&nbsp; </span><span style="color:#00e000">MACD Line</span><span style="color:#888;margin-right:2.5px">,&nbsp; </span><span style="color:#f00000">MACD Signal</span></div>
<div class="al r" style="top:115.2px">30.0</div><div class="ar" style="top:115.2px">30.0</div><div class="al r" style="top:144.2px">24.0</div><div class="ar" style="top:144.2px">24.0</div><div class="al r" style="top:174.2px">18.0</div><div class="ar" style="top:174.2px">18.0</div><div class="al r" style="top:204.2px">12.0</div><div class="ar" style="top:204.2px">12.0</div><div class="al r" style="top:234.2px">6.0</div><div class="ar" style="top:234.2px">6.0</div><div class="al r" style="top:288.2px">1.6</div><div class="ar" style="top:288.2px">1.6</div><div class="al r" style="top:315.2px">0.8</div><div class="ar" style="top:315.2px">0.8</div><div class="al r" style="top:343.2px">0.0</div><div class="ar" style="top:343.2px">0.0</div><div class="al r" style="top:370.2px">–0.8</div><div class="ar" style="top:370.2px">–0.8</div><div class="al r" style="top:398.2px">–1.6</div><div class="ar" style="top:398.2px">–1.6</div><div class="ml" style="left:80.5px">Apr '09</div><div class="ml" style="left:133.5px">May '09</div><div class="ml" style="left:183.5px">Jun '09</div><div class="ml" style="left:238.5px">Jul '09</div><div class="ml" style="left:293.5px">Aug '09</div><div class="ml" style="left:346px">Sep '09</div><div class="ml" style="left:398.5px">Oct '09</div><div class="ml" style="left:453.5px">Nov '09</div><div class="ml" style="left:503.5px">Dec '09</div><div class="ml" style="left:559px">Jan '10</div><div class="ml" style="left:606px">Feb '10</div><div class="ml" style="left:654px">Mar '10</div><div class="ml" style="left:711.5px">Apr '10</div><div class="ml" style="left:764px">May '10</div><div class="ml" style="left:814.5px">Jun '10</div>
<div class="cur" style="left:559.3px;top:88.2px;width:60px;text-align:center;color:#a6a6a6;letter-spacing:0;font-size:10.6px">Jan 4, 2010</div>
<svg id="ptag" width="44" height="14" viewBox="0 0 44 14"><defs><linearGradient id="pg" x1="0" y1="0" x2="0" y2="1"><stop offset="0" stop-color="#5fd68a"/><stop offset="1" stop-color="#22904a"/></linearGradient></defs><path d="M0 6.5 L6.5 0 H40.5 L43 2.5 V10.5 L40.5 13 H6.5 Z" fill="url(#pg)"/><text x="7.4" y="10" font-family="DejaVu Sans Condensed, DejaVu Sans, Liberation Sans, sans-serif" font-size="10" fill="#000" letter-spacing="0.25">10.34</text></svg>
</div></body></html>
